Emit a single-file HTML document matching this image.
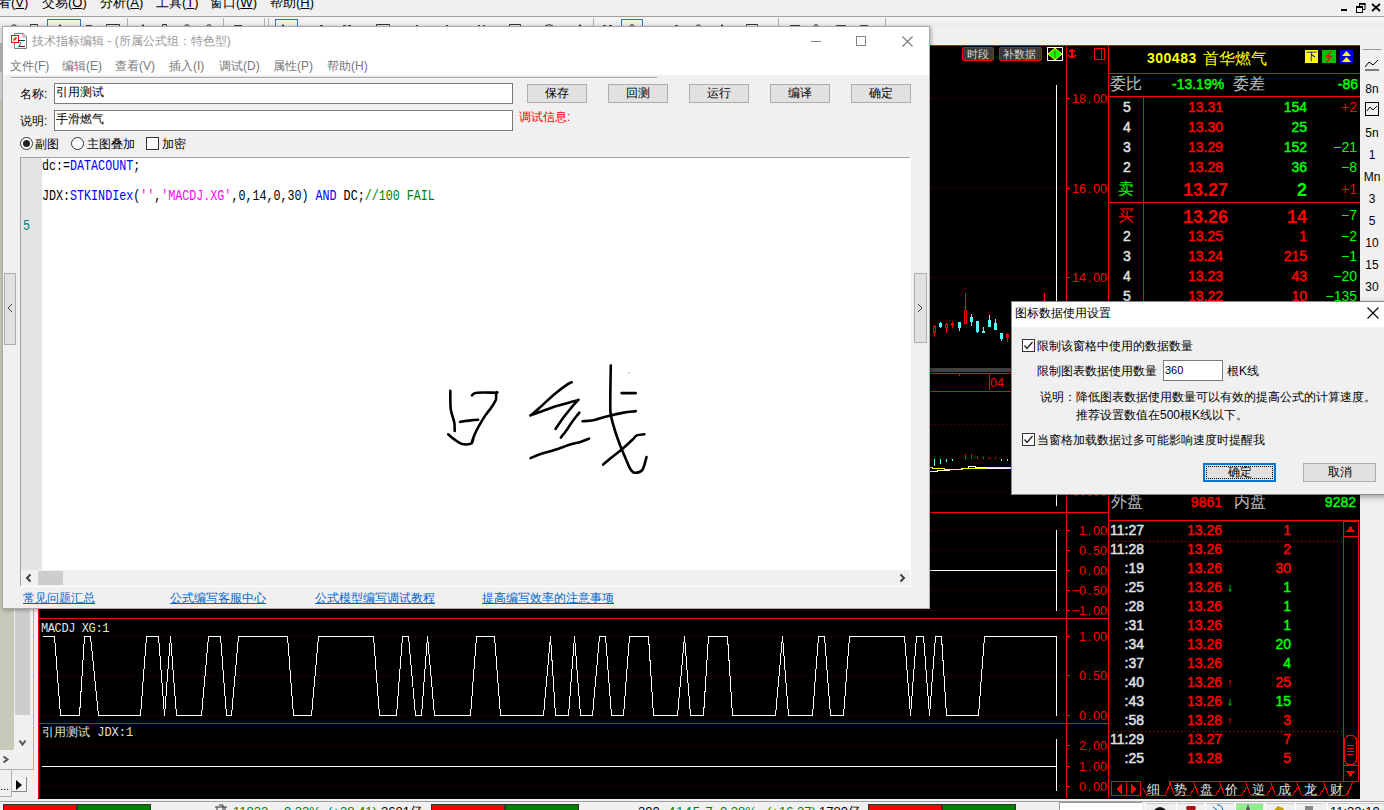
<!DOCTYPE html>
<html><head><meta charset="utf-8">
<style>
*{box-sizing:border-box}
html,body{margin:0;padding:0;width:1384px;height:810px;overflow:hidden;background:#f0f0f0;font-family:"Liberation Sans",sans-serif;font-size:12px;color:#000}
.a{position:absolute;white-space:nowrap}
svg.a{overflow:visible}
</style></head><body>
<svg class="a" style="left:0;top:0" width="1384" height="810" shape-rendering="crispEdges"><rect x="38" y="45" width="1322" height="754" fill="#000"/><rect x="38" y="45" width="1322" height="1" fill="#ff0000"/><rect x="38" y="45" width="1" height="753" fill="#ff0000"/><rect x="1066" y="45" width="1" height="753" fill="#ff0000"/><rect x="1108" y="45" width="1" height="753" fill="#ff0000"/><path d="M39 98h1v1h-1zM43 98h1v1h-1zM47 98h1v1h-1zM51 98h1v1h-1zM55 98h1v1h-1zM59 98h1v1h-1zM63 98h1v1h-1zM67 98h1v1h-1zM71 98h1v1h-1zM75 98h1v1h-1zM79 98h1v1h-1zM83 98h1v1h-1zM87 98h1v1h-1zM91 98h1v1h-1zM95 98h1v1h-1zM99 98h1v1h-1zM103 98h1v1h-1zM107 98h1v1h-1zM111 98h1v1h-1zM115 98h1v1h-1zM119 98h1v1h-1zM123 98h1v1h-1zM127 98h1v1h-1zM131 98h1v1h-1zM135 98h1v1h-1zM139 98h1v1h-1zM143 98h1v1h-1zM147 98h1v1h-1zM151 98h1v1h-1zM155 98h1v1h-1zM159 98h1v1h-1zM163 98h1v1h-1zM167 98h1v1h-1zM171 98h1v1h-1zM175 98h1v1h-1zM179 98h1v1h-1zM183 98h1v1h-1zM187 98h1v1h-1zM191 98h1v1h-1zM195 98h1v1h-1zM199 98h1v1h-1zM203 98h1v1h-1zM207 98h1v1h-1zM211 98h1v1h-1zM215 98h1v1h-1zM219 98h1v1h-1zM223 98h1v1h-1zM227 98h1v1h-1zM231 98h1v1h-1zM235 98h1v1h-1zM239 98h1v1h-1zM243 98h1v1h-1zM247 98h1v1h-1zM251 98h1v1h-1zM255 98h1v1h-1zM259 98h1v1h-1zM263 98h1v1h-1zM267 98h1v1h-1zM271 98h1v1h-1zM275 98h1v1h-1zM279 98h1v1h-1zM283 98h1v1h-1zM287 98h1v1h-1zM291 98h1v1h-1zM295 98h1v1h-1zM299 98h1v1h-1zM303 98h1v1h-1zM307 98h1v1h-1zM311 98h1v1h-1zM315 98h1v1h-1zM319 98h1v1h-1zM323 98h1v1h-1zM327 98h1v1h-1zM331 98h1v1h-1zM335 98h1v1h-1zM339 98h1v1h-1zM343 98h1v1h-1zM347 98h1v1h-1zM351 98h1v1h-1zM355 98h1v1h-1zM359 98h1v1h-1zM363 98h1v1h-1zM367 98h1v1h-1zM371 98h1v1h-1zM375 98h1v1h-1zM379 98h1v1h-1zM383 98h1v1h-1zM387 98h1v1h-1zM391 98h1v1h-1zM395 98h1v1h-1zM399 98h1v1h-1zM403 98h1v1h-1zM407 98h1v1h-1zM411 98h1v1h-1zM415 98h1v1h-1zM419 98h1v1h-1zM423 98h1v1h-1zM427 98h1v1h-1zM431 98h1v1h-1zM435 98h1v1h-1zM439 98h1v1h-1zM443 98h1v1h-1zM447 98h1v1h-1zM451 98h1v1h-1zM455 98h1v1h-1zM459 98h1v1h-1zM463 98h1v1h-1zM467 98h1v1h-1zM471 98h1v1h-1zM475 98h1v1h-1zM479 98h1v1h-1zM483 98h1v1h-1zM487 98h1v1h-1zM491 98h1v1h-1zM495 98h1v1h-1zM499 98h1v1h-1zM503 98h1v1h-1zM507 98h1v1h-1zM511 98h1v1h-1zM515 98h1v1h-1zM519 98h1v1h-1zM523 98h1v1h-1zM527 98h1v1h-1zM531 98h1v1h-1zM535 98h1v1h-1zM539 98h1v1h-1zM543 98h1v1h-1zM547 98h1v1h-1zM551 98h1v1h-1zM555 98h1v1h-1zM559 98h1v1h-1zM563 98h1v1h-1zM567 98h1v1h-1zM571 98h1v1h-1zM575 98h1v1h-1zM579 98h1v1h-1zM583 98h1v1h-1zM587 98h1v1h-1zM591 98h1v1h-1zM595 98h1v1h-1zM599 98h1v1h-1zM603 98h1v1h-1zM607 98h1v1h-1zM611 98h1v1h-1zM615 98h1v1h-1zM619 98h1v1h-1zM623 98h1v1h-1zM627 98h1v1h-1zM631 98h1v1h-1zM635 98h1v1h-1zM639 98h1v1h-1zM643 98h1v1h-1zM647 98h1v1h-1zM651 98h1v1h-1zM655 98h1v1h-1zM659 98h1v1h-1zM663 98h1v1h-1zM667 98h1v1h-1zM671 98h1v1h-1zM675 98h1v1h-1zM679 98h1v1h-1zM683 98h1v1h-1zM687 98h1v1h-1zM691 98h1v1h-1zM695 98h1v1h-1zM699 98h1v1h-1zM703 98h1v1h-1zM707 98h1v1h-1zM711 98h1v1h-1zM715 98h1v1h-1zM719 98h1v1h-1zM723 98h1v1h-1zM727 98h1v1h-1zM731 98h1v1h-1zM735 98h1v1h-1zM739 98h1v1h-1zM743 98h1v1h-1zM747 98h1v1h-1zM751 98h1v1h-1zM755 98h1v1h-1zM759 98h1v1h-1zM763 98h1v1h-1zM767 98h1v1h-1zM771 98h1v1h-1zM775 98h1v1h-1zM779 98h1v1h-1zM783 98h1v1h-1zM787 98h1v1h-1zM791 98h1v1h-1zM795 98h1v1h-1zM799 98h1v1h-1zM803 98h1v1h-1zM807 98h1v1h-1zM811 98h1v1h-1zM815 98h1v1h-1zM819 98h1v1h-1zM823 98h1v1h-1zM827 98h1v1h-1zM831 98h1v1h-1zM835 98h1v1h-1zM839 98h1v1h-1zM843 98h1v1h-1zM847 98h1v1h-1zM851 98h1v1h-1zM855 98h1v1h-1zM859 98h1v1h-1zM863 98h1v1h-1zM867 98h1v1h-1zM871 98h1v1h-1zM875 98h1v1h-1zM879 98h1v1h-1zM883 98h1v1h-1zM887 98h1v1h-1zM891 98h1v1h-1zM895 98h1v1h-1zM899 98h1v1h-1zM903 98h1v1h-1zM907 98h1v1h-1zM911 98h1v1h-1zM915 98h1v1h-1zM919 98h1v1h-1zM923 98h1v1h-1zM927 98h1v1h-1zM931 98h1v1h-1zM935 98h1v1h-1zM939 98h1v1h-1zM943 98h1v1h-1zM947 98h1v1h-1zM951 98h1v1h-1zM955 98h1v1h-1zM959 98h1v1h-1zM963 98h1v1h-1zM967 98h1v1h-1zM971 98h1v1h-1zM975 98h1v1h-1zM979 98h1v1h-1zM983 98h1v1h-1zM987 98h1v1h-1zM991 98h1v1h-1zM995 98h1v1h-1zM999 98h1v1h-1zM1003 98h1v1h-1zM1007 98h1v1h-1zM1011 98h1v1h-1zM1015 98h1v1h-1zM1019 98h1v1h-1zM1023 98h1v1h-1zM1027 98h1v1h-1zM1031 98h1v1h-1zM1035 98h1v1h-1zM1039 98h1v1h-1zM1043 98h1v1h-1zM1047 98h1v1h-1zM1051 98h1v1h-1zM1055 98h1v1h-1zM1059 98h1v1h-1zM1063 98h1v1h-1z" fill="#800000"/><rect x="1066" y="98" width="4" height="1" fill="#ff0000"/><path d="M39 188h1v1h-1zM43 188h1v1h-1zM47 188h1v1h-1zM51 188h1v1h-1zM55 188h1v1h-1zM59 188h1v1h-1zM63 188h1v1h-1zM67 188h1v1h-1zM71 188h1v1h-1zM75 188h1v1h-1zM79 188h1v1h-1zM83 188h1v1h-1zM87 188h1v1h-1zM91 188h1v1h-1zM95 188h1v1h-1zM99 188h1v1h-1zM103 188h1v1h-1zM107 188h1v1h-1zM111 188h1v1h-1zM115 188h1v1h-1zM119 188h1v1h-1zM123 188h1v1h-1zM127 188h1v1h-1zM131 188h1v1h-1zM135 188h1v1h-1zM139 188h1v1h-1zM143 188h1v1h-1zM147 188h1v1h-1zM151 188h1v1h-1zM155 188h1v1h-1zM159 188h1v1h-1zM163 188h1v1h-1zM167 188h1v1h-1zM171 188h1v1h-1zM175 188h1v1h-1zM179 188h1v1h-1zM183 188h1v1h-1zM187 188h1v1h-1zM191 188h1v1h-1zM195 188h1v1h-1zM199 188h1v1h-1zM203 188h1v1h-1zM207 188h1v1h-1zM211 188h1v1h-1zM215 188h1v1h-1zM219 188h1v1h-1zM223 188h1v1h-1zM227 188h1v1h-1zM231 188h1v1h-1zM235 188h1v1h-1zM239 188h1v1h-1zM243 188h1v1h-1zM247 188h1v1h-1zM251 188h1v1h-1zM255 188h1v1h-1zM259 188h1v1h-1zM263 188h1v1h-1zM267 188h1v1h-1zM271 188h1v1h-1zM275 188h1v1h-1zM279 188h1v1h-1zM283 188h1v1h-1zM287 188h1v1h-1zM291 188h1v1h-1zM295 188h1v1h-1zM299 188h1v1h-1zM303 188h1v1h-1zM307 188h1v1h-1zM311 188h1v1h-1zM315 188h1v1h-1zM319 188h1v1h-1zM323 188h1v1h-1zM327 188h1v1h-1zM331 188h1v1h-1zM335 188h1v1h-1zM339 188h1v1h-1zM343 188h1v1h-1zM347 188h1v1h-1zM351 188h1v1h-1zM355 188h1v1h-1zM359 188h1v1h-1zM363 188h1v1h-1zM367 188h1v1h-1zM371 188h1v1h-1zM375 188h1v1h-1zM379 188h1v1h-1zM383 188h1v1h-1zM387 188h1v1h-1zM391 188h1v1h-1zM395 188h1v1h-1zM399 188h1v1h-1zM403 188h1v1h-1zM407 188h1v1h-1zM411 188h1v1h-1zM415 188h1v1h-1zM419 188h1v1h-1zM423 188h1v1h-1zM427 188h1v1h-1zM431 188h1v1h-1zM435 188h1v1h-1zM439 188h1v1h-1zM443 188h1v1h-1zM447 188h1v1h-1zM451 188h1v1h-1zM455 188h1v1h-1zM459 188h1v1h-1zM463 188h1v1h-1zM467 188h1v1h-1zM471 188h1v1h-1zM475 188h1v1h-1zM479 188h1v1h-1zM483 188h1v1h-1zM487 188h1v1h-1zM491 188h1v1h-1zM495 188h1v1h-1zM499 188h1v1h-1zM503 188h1v1h-1zM507 188h1v1h-1zM511 188h1v1h-1zM515 188h1v1h-1zM519 188h1v1h-1zM523 188h1v1h-1zM527 188h1v1h-1zM531 188h1v1h-1zM535 188h1v1h-1zM539 188h1v1h-1zM543 188h1v1h-1zM547 188h1v1h-1zM551 188h1v1h-1zM555 188h1v1h-1zM559 188h1v1h-1zM563 188h1v1h-1zM567 188h1v1h-1zM571 188h1v1h-1zM575 188h1v1h-1zM579 188h1v1h-1zM583 188h1v1h-1zM587 188h1v1h-1zM591 188h1v1h-1zM595 188h1v1h-1zM599 188h1v1h-1zM603 188h1v1h-1zM607 188h1v1h-1zM611 188h1v1h-1zM615 188h1v1h-1zM619 188h1v1h-1zM623 188h1v1h-1zM627 188h1v1h-1zM631 188h1v1h-1zM635 188h1v1h-1zM639 188h1v1h-1zM643 188h1v1h-1zM647 188h1v1h-1zM651 188h1v1h-1zM655 188h1v1h-1zM659 188h1v1h-1zM663 188h1v1h-1zM667 188h1v1h-1zM671 188h1v1h-1zM675 188h1v1h-1zM679 188h1v1h-1zM683 188h1v1h-1zM687 188h1v1h-1zM691 188h1v1h-1zM695 188h1v1h-1zM699 188h1v1h-1zM703 188h1v1h-1zM707 188h1v1h-1zM711 188h1v1h-1zM715 188h1v1h-1zM719 188h1v1h-1zM723 188h1v1h-1zM727 188h1v1h-1zM731 188h1v1h-1zM735 188h1v1h-1zM739 188h1v1h-1zM743 188h1v1h-1zM747 188h1v1h-1zM751 188h1v1h-1zM755 188h1v1h-1zM759 188h1v1h-1zM763 188h1v1h-1zM767 188h1v1h-1zM771 188h1v1h-1zM775 188h1v1h-1zM779 188h1v1h-1zM783 188h1v1h-1zM787 188h1v1h-1zM791 188h1v1h-1zM795 188h1v1h-1zM799 188h1v1h-1zM803 188h1v1h-1zM807 188h1v1h-1zM811 188h1v1h-1zM815 188h1v1h-1zM819 188h1v1h-1zM823 188h1v1h-1zM827 188h1v1h-1zM831 188h1v1h-1zM835 188h1v1h-1zM839 188h1v1h-1zM843 188h1v1h-1zM847 188h1v1h-1zM851 188h1v1h-1zM855 188h1v1h-1zM859 188h1v1h-1zM863 188h1v1h-1zM867 188h1v1h-1zM871 188h1v1h-1zM875 188h1v1h-1zM879 188h1v1h-1zM883 188h1v1h-1zM887 188h1v1h-1zM891 188h1v1h-1zM895 188h1v1h-1zM899 188h1v1h-1zM903 188h1v1h-1zM907 188h1v1h-1zM911 188h1v1h-1zM915 188h1v1h-1zM919 188h1v1h-1zM923 188h1v1h-1zM927 188h1v1h-1zM931 188h1v1h-1zM935 188h1v1h-1zM939 188h1v1h-1zM943 188h1v1h-1zM947 188h1v1h-1zM951 188h1v1h-1zM955 188h1v1h-1zM959 188h1v1h-1zM963 188h1v1h-1zM967 188h1v1h-1zM971 188h1v1h-1zM975 188h1v1h-1zM979 188h1v1h-1zM983 188h1v1h-1zM987 188h1v1h-1zM991 188h1v1h-1zM995 188h1v1h-1zM999 188h1v1h-1zM1003 188h1v1h-1zM1007 188h1v1h-1zM1011 188h1v1h-1zM1015 188h1v1h-1zM1019 188h1v1h-1zM1023 188h1v1h-1zM1027 188h1v1h-1zM1031 188h1v1h-1zM1035 188h1v1h-1zM1039 188h1v1h-1zM1043 188h1v1h-1zM1047 188h1v1h-1zM1051 188h1v1h-1zM1055 188h1v1h-1zM1059 188h1v1h-1zM1063 188h1v1h-1z" fill="#800000"/><rect x="1066" y="188" width="4" height="1" fill="#ff0000"/><path d="M39 277h1v1h-1zM43 277h1v1h-1zM47 277h1v1h-1zM51 277h1v1h-1zM55 277h1v1h-1zM59 277h1v1h-1zM63 277h1v1h-1zM67 277h1v1h-1zM71 277h1v1h-1zM75 277h1v1h-1zM79 277h1v1h-1zM83 277h1v1h-1zM87 277h1v1h-1zM91 277h1v1h-1zM95 277h1v1h-1zM99 277h1v1h-1zM103 277h1v1h-1zM107 277h1v1h-1zM111 277h1v1h-1zM115 277h1v1h-1zM119 277h1v1h-1zM123 277h1v1h-1zM127 277h1v1h-1zM131 277h1v1h-1zM135 277h1v1h-1zM139 277h1v1h-1zM143 277h1v1h-1zM147 277h1v1h-1zM151 277h1v1h-1zM155 277h1v1h-1zM159 277h1v1h-1zM163 277h1v1h-1zM167 277h1v1h-1zM171 277h1v1h-1zM175 277h1v1h-1zM179 277h1v1h-1zM183 277h1v1h-1zM187 277h1v1h-1zM191 277h1v1h-1zM195 277h1v1h-1zM199 277h1v1h-1zM203 277h1v1h-1zM207 277h1v1h-1zM211 277h1v1h-1zM215 277h1v1h-1zM219 277h1v1h-1zM223 277h1v1h-1zM227 277h1v1h-1zM231 277h1v1h-1zM235 277h1v1h-1zM239 277h1v1h-1zM243 277h1v1h-1zM247 277h1v1h-1zM251 277h1v1h-1zM255 277h1v1h-1zM259 277h1v1h-1zM263 277h1v1h-1zM267 277h1v1h-1zM271 277h1v1h-1zM275 277h1v1h-1zM279 277h1v1h-1zM283 277h1v1h-1zM287 277h1v1h-1zM291 277h1v1h-1zM295 277h1v1h-1zM299 277h1v1h-1zM303 277h1v1h-1zM307 277h1v1h-1zM311 277h1v1h-1zM315 277h1v1h-1zM319 277h1v1h-1zM323 277h1v1h-1zM327 277h1v1h-1zM331 277h1v1h-1zM335 277h1v1h-1zM339 277h1v1h-1zM343 277h1v1h-1zM347 277h1v1h-1zM351 277h1v1h-1zM355 277h1v1h-1zM359 277h1v1h-1zM363 277h1v1h-1zM367 277h1v1h-1zM371 277h1v1h-1zM375 277h1v1h-1zM379 277h1v1h-1zM383 277h1v1h-1zM387 277h1v1h-1zM391 277h1v1h-1zM395 277h1v1h-1zM399 277h1v1h-1zM403 277h1v1h-1zM407 277h1v1h-1zM411 277h1v1h-1zM415 277h1v1h-1zM419 277h1v1h-1zM423 277h1v1h-1zM427 277h1v1h-1zM431 277h1v1h-1zM435 277h1v1h-1zM439 277h1v1h-1zM443 277h1v1h-1zM447 277h1v1h-1zM451 277h1v1h-1zM455 277h1v1h-1zM459 277h1v1h-1zM463 277h1v1h-1zM467 277h1v1h-1zM471 277h1v1h-1zM475 277h1v1h-1zM479 277h1v1h-1zM483 277h1v1h-1zM487 277h1v1h-1zM491 277h1v1h-1zM495 277h1v1h-1zM499 277h1v1h-1zM503 277h1v1h-1zM507 277h1v1h-1zM511 277h1v1h-1zM515 277h1v1h-1zM519 277h1v1h-1zM523 277h1v1h-1zM527 277h1v1h-1zM531 277h1v1h-1zM535 277h1v1h-1zM539 277h1v1h-1zM543 277h1v1h-1zM547 277h1v1h-1zM551 277h1v1h-1zM555 277h1v1h-1zM559 277h1v1h-1zM563 277h1v1h-1zM567 277h1v1h-1zM571 277h1v1h-1zM575 277h1v1h-1zM579 277h1v1h-1zM583 277h1v1h-1zM587 277h1v1h-1zM591 277h1v1h-1zM595 277h1v1h-1zM599 277h1v1h-1zM603 277h1v1h-1zM607 277h1v1h-1zM611 277h1v1h-1zM615 277h1v1h-1zM619 277h1v1h-1zM623 277h1v1h-1zM627 277h1v1h-1zM631 277h1v1h-1zM635 277h1v1h-1zM639 277h1v1h-1zM643 277h1v1h-1zM647 277h1v1h-1zM651 277h1v1h-1zM655 277h1v1h-1zM659 277h1v1h-1zM663 277h1v1h-1zM667 277h1v1h-1zM671 277h1v1h-1zM675 277h1v1h-1zM679 277h1v1h-1zM683 277h1v1h-1zM687 277h1v1h-1zM691 277h1v1h-1zM695 277h1v1h-1zM699 277h1v1h-1zM703 277h1v1h-1zM707 277h1v1h-1zM711 277h1v1h-1zM715 277h1v1h-1zM719 277h1v1h-1zM723 277h1v1h-1zM727 277h1v1h-1zM731 277h1v1h-1zM735 277h1v1h-1zM739 277h1v1h-1zM743 277h1v1h-1zM747 277h1v1h-1zM751 277h1v1h-1zM755 277h1v1h-1zM759 277h1v1h-1zM763 277h1v1h-1zM767 277h1v1h-1zM771 277h1v1h-1zM775 277h1v1h-1zM779 277h1v1h-1zM783 277h1v1h-1zM787 277h1v1h-1zM791 277h1v1h-1zM795 277h1v1h-1zM799 277h1v1h-1zM803 277h1v1h-1zM807 277h1v1h-1zM811 277h1v1h-1zM815 277h1v1h-1zM819 277h1v1h-1zM823 277h1v1h-1zM827 277h1v1h-1zM831 277h1v1h-1zM835 277h1v1h-1zM839 277h1v1h-1zM843 277h1v1h-1zM847 277h1v1h-1zM851 277h1v1h-1zM855 277h1v1h-1zM859 277h1v1h-1zM863 277h1v1h-1zM867 277h1v1h-1zM871 277h1v1h-1zM875 277h1v1h-1zM879 277h1v1h-1zM883 277h1v1h-1zM887 277h1v1h-1zM891 277h1v1h-1zM895 277h1v1h-1zM899 277h1v1h-1zM903 277h1v1h-1zM907 277h1v1h-1zM911 277h1v1h-1zM915 277h1v1h-1zM919 277h1v1h-1zM923 277h1v1h-1zM927 277h1v1h-1zM931 277h1v1h-1zM935 277h1v1h-1zM939 277h1v1h-1zM943 277h1v1h-1zM947 277h1v1h-1zM951 277h1v1h-1zM955 277h1v1h-1zM959 277h1v1h-1zM963 277h1v1h-1zM967 277h1v1h-1zM971 277h1v1h-1zM975 277h1v1h-1zM979 277h1v1h-1zM983 277h1v1h-1zM987 277h1v1h-1zM991 277h1v1h-1zM995 277h1v1h-1zM999 277h1v1h-1zM1003 277h1v1h-1zM1007 277h1v1h-1zM1011 277h1v1h-1zM1015 277h1v1h-1zM1019 277h1v1h-1zM1023 277h1v1h-1zM1027 277h1v1h-1zM1031 277h1v1h-1zM1035 277h1v1h-1zM1039 277h1v1h-1zM1043 277h1v1h-1zM1047 277h1v1h-1zM1051 277h1v1h-1zM1055 277h1v1h-1zM1059 277h1v1h-1zM1063 277h1v1h-1z" fill="#800000"/><rect x="1066" y="277" width="4" height="1" fill="#ff0000"/><rect x="38" y="368" width="1028" height="4" fill="#404040"/><rect x="38" y="373" width="1028" height="1" fill="#ff0000"/><rect x="38" y="391" width="1028" height="1" fill="#ff0000"/><rect x="989" y="374" width="1" height="16" fill="#ff0000"/><rect x="959" y="374" width="1" height="2" fill="#ff0000"/><path d="M39 424h1v1h-1zM43 424h1v1h-1zM47 424h1v1h-1zM51 424h1v1h-1zM55 424h1v1h-1zM59 424h1v1h-1zM63 424h1v1h-1zM67 424h1v1h-1zM71 424h1v1h-1zM75 424h1v1h-1zM79 424h1v1h-1zM83 424h1v1h-1zM87 424h1v1h-1zM91 424h1v1h-1zM95 424h1v1h-1zM99 424h1v1h-1zM103 424h1v1h-1zM107 424h1v1h-1zM111 424h1v1h-1zM115 424h1v1h-1zM119 424h1v1h-1zM123 424h1v1h-1zM127 424h1v1h-1zM131 424h1v1h-1zM135 424h1v1h-1zM139 424h1v1h-1zM143 424h1v1h-1zM147 424h1v1h-1zM151 424h1v1h-1zM155 424h1v1h-1zM159 424h1v1h-1zM163 424h1v1h-1zM167 424h1v1h-1zM171 424h1v1h-1zM175 424h1v1h-1zM179 424h1v1h-1zM183 424h1v1h-1zM187 424h1v1h-1zM191 424h1v1h-1zM195 424h1v1h-1zM199 424h1v1h-1zM203 424h1v1h-1zM207 424h1v1h-1zM211 424h1v1h-1zM215 424h1v1h-1zM219 424h1v1h-1zM223 424h1v1h-1zM227 424h1v1h-1zM231 424h1v1h-1zM235 424h1v1h-1zM239 424h1v1h-1zM243 424h1v1h-1zM247 424h1v1h-1zM251 424h1v1h-1zM255 424h1v1h-1zM259 424h1v1h-1zM263 424h1v1h-1zM267 424h1v1h-1zM271 424h1v1h-1zM275 424h1v1h-1zM279 424h1v1h-1zM283 424h1v1h-1zM287 424h1v1h-1zM291 424h1v1h-1zM295 424h1v1h-1zM299 424h1v1h-1zM303 424h1v1h-1zM307 424h1v1h-1zM311 424h1v1h-1zM315 424h1v1h-1zM319 424h1v1h-1zM323 424h1v1h-1zM327 424h1v1h-1zM331 424h1v1h-1zM335 424h1v1h-1zM339 424h1v1h-1zM343 424h1v1h-1zM347 424h1v1h-1zM351 424h1v1h-1zM355 424h1v1h-1zM359 424h1v1h-1zM363 424h1v1h-1zM367 424h1v1h-1zM371 424h1v1h-1zM375 424h1v1h-1zM379 424h1v1h-1zM383 424h1v1h-1zM387 424h1v1h-1zM391 424h1v1h-1zM395 424h1v1h-1zM399 424h1v1h-1zM403 424h1v1h-1zM407 424h1v1h-1zM411 424h1v1h-1zM415 424h1v1h-1zM419 424h1v1h-1zM423 424h1v1h-1zM427 424h1v1h-1zM431 424h1v1h-1zM435 424h1v1h-1zM439 424h1v1h-1zM443 424h1v1h-1zM447 424h1v1h-1zM451 424h1v1h-1zM455 424h1v1h-1zM459 424h1v1h-1zM463 424h1v1h-1zM467 424h1v1h-1zM471 424h1v1h-1zM475 424h1v1h-1zM479 424h1v1h-1zM483 424h1v1h-1zM487 424h1v1h-1zM491 424h1v1h-1zM495 424h1v1h-1zM499 424h1v1h-1zM503 424h1v1h-1zM507 424h1v1h-1zM511 424h1v1h-1zM515 424h1v1h-1zM519 424h1v1h-1zM523 424h1v1h-1zM527 424h1v1h-1zM531 424h1v1h-1zM535 424h1v1h-1zM539 424h1v1h-1zM543 424h1v1h-1zM547 424h1v1h-1zM551 424h1v1h-1zM555 424h1v1h-1zM559 424h1v1h-1zM563 424h1v1h-1zM567 424h1v1h-1zM571 424h1v1h-1zM575 424h1v1h-1zM579 424h1v1h-1zM583 424h1v1h-1zM587 424h1v1h-1zM591 424h1v1h-1zM595 424h1v1h-1zM599 424h1v1h-1zM603 424h1v1h-1zM607 424h1v1h-1zM611 424h1v1h-1zM615 424h1v1h-1zM619 424h1v1h-1zM623 424h1v1h-1zM627 424h1v1h-1zM631 424h1v1h-1zM635 424h1v1h-1zM639 424h1v1h-1zM643 424h1v1h-1zM647 424h1v1h-1zM651 424h1v1h-1zM655 424h1v1h-1zM659 424h1v1h-1zM663 424h1v1h-1zM667 424h1v1h-1zM671 424h1v1h-1zM675 424h1v1h-1zM679 424h1v1h-1zM683 424h1v1h-1zM687 424h1v1h-1zM691 424h1v1h-1zM695 424h1v1h-1zM699 424h1v1h-1zM703 424h1v1h-1zM707 424h1v1h-1zM711 424h1v1h-1zM715 424h1v1h-1zM719 424h1v1h-1zM723 424h1v1h-1zM727 424h1v1h-1zM731 424h1v1h-1zM735 424h1v1h-1zM739 424h1v1h-1zM743 424h1v1h-1zM747 424h1v1h-1zM751 424h1v1h-1zM755 424h1v1h-1zM759 424h1v1h-1zM763 424h1v1h-1zM767 424h1v1h-1zM771 424h1v1h-1zM775 424h1v1h-1zM779 424h1v1h-1zM783 424h1v1h-1zM787 424h1v1h-1zM791 424h1v1h-1zM795 424h1v1h-1zM799 424h1v1h-1zM803 424h1v1h-1zM807 424h1v1h-1zM811 424h1v1h-1zM815 424h1v1h-1zM819 424h1v1h-1zM823 424h1v1h-1zM827 424h1v1h-1zM831 424h1v1h-1zM835 424h1v1h-1zM839 424h1v1h-1zM843 424h1v1h-1zM847 424h1v1h-1zM851 424h1v1h-1zM855 424h1v1h-1zM859 424h1v1h-1zM863 424h1v1h-1zM867 424h1v1h-1zM871 424h1v1h-1zM875 424h1v1h-1zM879 424h1v1h-1zM883 424h1v1h-1zM887 424h1v1h-1zM891 424h1v1h-1zM895 424h1v1h-1zM899 424h1v1h-1zM903 424h1v1h-1zM907 424h1v1h-1zM911 424h1v1h-1zM915 424h1v1h-1zM919 424h1v1h-1zM923 424h1v1h-1zM927 424h1v1h-1zM931 424h1v1h-1zM935 424h1v1h-1zM939 424h1v1h-1zM943 424h1v1h-1zM947 424h1v1h-1zM951 424h1v1h-1zM955 424h1v1h-1zM959 424h1v1h-1zM963 424h1v1h-1zM967 424h1v1h-1zM971 424h1v1h-1zM975 424h1v1h-1zM979 424h1v1h-1zM983 424h1v1h-1zM987 424h1v1h-1zM991 424h1v1h-1zM995 424h1v1h-1zM999 424h1v1h-1zM1003 424h1v1h-1zM1007 424h1v1h-1zM1011 424h1v1h-1zM1015 424h1v1h-1zM1019 424h1v1h-1zM1023 424h1v1h-1zM1027 424h1v1h-1zM1031 424h1v1h-1zM1035 424h1v1h-1zM1039 424h1v1h-1zM1043 424h1v1h-1zM1047 424h1v1h-1zM1051 424h1v1h-1zM1055 424h1v1h-1zM1059 424h1v1h-1zM1063 424h1v1h-1z" fill="#800000"/><path d="M39 458h1v1h-1zM43 458h1v1h-1zM47 458h1v1h-1zM51 458h1v1h-1zM55 458h1v1h-1zM59 458h1v1h-1zM63 458h1v1h-1zM67 458h1v1h-1zM71 458h1v1h-1zM75 458h1v1h-1zM79 458h1v1h-1zM83 458h1v1h-1zM87 458h1v1h-1zM91 458h1v1h-1zM95 458h1v1h-1zM99 458h1v1h-1zM103 458h1v1h-1zM107 458h1v1h-1zM111 458h1v1h-1zM115 458h1v1h-1zM119 458h1v1h-1zM123 458h1v1h-1zM127 458h1v1h-1zM131 458h1v1h-1zM135 458h1v1h-1zM139 458h1v1h-1zM143 458h1v1h-1zM147 458h1v1h-1zM151 458h1v1h-1zM155 458h1v1h-1zM159 458h1v1h-1zM163 458h1v1h-1zM167 458h1v1h-1zM171 458h1v1h-1zM175 458h1v1h-1zM179 458h1v1h-1zM183 458h1v1h-1zM187 458h1v1h-1zM191 458h1v1h-1zM195 458h1v1h-1zM199 458h1v1h-1zM203 458h1v1h-1zM207 458h1v1h-1zM211 458h1v1h-1zM215 458h1v1h-1zM219 458h1v1h-1zM223 458h1v1h-1zM227 458h1v1h-1zM231 458h1v1h-1zM235 458h1v1h-1zM239 458h1v1h-1zM243 458h1v1h-1zM247 458h1v1h-1zM251 458h1v1h-1zM255 458h1v1h-1zM259 458h1v1h-1zM263 458h1v1h-1zM267 458h1v1h-1zM271 458h1v1h-1zM275 458h1v1h-1zM279 458h1v1h-1zM283 458h1v1h-1zM287 458h1v1h-1zM291 458h1v1h-1zM295 458h1v1h-1zM299 458h1v1h-1zM303 458h1v1h-1zM307 458h1v1h-1zM311 458h1v1h-1zM315 458h1v1h-1zM319 458h1v1h-1zM323 458h1v1h-1zM327 458h1v1h-1zM331 458h1v1h-1zM335 458h1v1h-1zM339 458h1v1h-1zM343 458h1v1h-1zM347 458h1v1h-1zM351 458h1v1h-1zM355 458h1v1h-1zM359 458h1v1h-1zM363 458h1v1h-1zM367 458h1v1h-1zM371 458h1v1h-1zM375 458h1v1h-1zM379 458h1v1h-1zM383 458h1v1h-1zM387 458h1v1h-1zM391 458h1v1h-1zM395 458h1v1h-1zM399 458h1v1h-1zM403 458h1v1h-1zM407 458h1v1h-1zM411 458h1v1h-1zM415 458h1v1h-1zM419 458h1v1h-1zM423 458h1v1h-1zM427 458h1v1h-1zM431 458h1v1h-1zM435 458h1v1h-1zM439 458h1v1h-1zM443 458h1v1h-1zM447 458h1v1h-1zM451 458h1v1h-1zM455 458h1v1h-1zM459 458h1v1h-1zM463 458h1v1h-1zM467 458h1v1h-1zM471 458h1v1h-1zM475 458h1v1h-1zM479 458h1v1h-1zM483 458h1v1h-1zM487 458h1v1h-1zM491 458h1v1h-1zM495 458h1v1h-1zM499 458h1v1h-1zM503 458h1v1h-1zM507 458h1v1h-1zM511 458h1v1h-1zM515 458h1v1h-1zM519 458h1v1h-1zM523 458h1v1h-1zM527 458h1v1h-1zM531 458h1v1h-1zM535 458h1v1h-1zM539 458h1v1h-1zM543 458h1v1h-1zM547 458h1v1h-1zM551 458h1v1h-1zM555 458h1v1h-1zM559 458h1v1h-1zM563 458h1v1h-1zM567 458h1v1h-1zM571 458h1v1h-1zM575 458h1v1h-1zM579 458h1v1h-1zM583 458h1v1h-1zM587 458h1v1h-1zM591 458h1v1h-1zM595 458h1v1h-1zM599 458h1v1h-1zM603 458h1v1h-1zM607 458h1v1h-1zM611 458h1v1h-1zM615 458h1v1h-1zM619 458h1v1h-1zM623 458h1v1h-1zM627 458h1v1h-1zM631 458h1v1h-1zM635 458h1v1h-1zM639 458h1v1h-1zM643 458h1v1h-1zM647 458h1v1h-1zM651 458h1v1h-1zM655 458h1v1h-1zM659 458h1v1h-1zM663 458h1v1h-1zM667 458h1v1h-1zM671 458h1v1h-1zM675 458h1v1h-1zM679 458h1v1h-1zM683 458h1v1h-1zM687 458h1v1h-1zM691 458h1v1h-1zM695 458h1v1h-1zM699 458h1v1h-1zM703 458h1v1h-1zM707 458h1v1h-1zM711 458h1v1h-1zM715 458h1v1h-1zM719 458h1v1h-1zM723 458h1v1h-1zM727 458h1v1h-1zM731 458h1v1h-1zM735 458h1v1h-1zM739 458h1v1h-1zM743 458h1v1h-1zM747 458h1v1h-1zM751 458h1v1h-1zM755 458h1v1h-1zM759 458h1v1h-1zM763 458h1v1h-1zM767 458h1v1h-1zM771 458h1v1h-1zM775 458h1v1h-1zM779 458h1v1h-1zM783 458h1v1h-1zM787 458h1v1h-1zM791 458h1v1h-1zM795 458h1v1h-1zM799 458h1v1h-1zM803 458h1v1h-1zM807 458h1v1h-1zM811 458h1v1h-1zM815 458h1v1h-1zM819 458h1v1h-1zM823 458h1v1h-1zM827 458h1v1h-1zM831 458h1v1h-1zM835 458h1v1h-1zM839 458h1v1h-1zM843 458h1v1h-1zM847 458h1v1h-1zM851 458h1v1h-1zM855 458h1v1h-1zM859 458h1v1h-1zM863 458h1v1h-1zM867 458h1v1h-1zM871 458h1v1h-1zM875 458h1v1h-1zM879 458h1v1h-1zM883 458h1v1h-1zM887 458h1v1h-1zM891 458h1v1h-1zM895 458h1v1h-1zM899 458h1v1h-1zM903 458h1v1h-1zM907 458h1v1h-1zM911 458h1v1h-1zM915 458h1v1h-1zM919 458h1v1h-1zM923 458h1v1h-1zM927 458h1v1h-1zM931 458h1v1h-1zM935 458h1v1h-1zM939 458h1v1h-1zM943 458h1v1h-1zM947 458h1v1h-1zM951 458h1v1h-1zM955 458h1v1h-1zM959 458h1v1h-1zM963 458h1v1h-1zM967 458h1v1h-1zM971 458h1v1h-1zM975 458h1v1h-1zM979 458h1v1h-1zM983 458h1v1h-1zM987 458h1v1h-1zM991 458h1v1h-1zM995 458h1v1h-1zM999 458h1v1h-1zM1003 458h1v1h-1zM1007 458h1v1h-1zM1011 458h1v1h-1zM1015 458h1v1h-1zM1019 458h1v1h-1zM1023 458h1v1h-1zM1027 458h1v1h-1zM1031 458h1v1h-1zM1035 458h1v1h-1zM1039 458h1v1h-1zM1043 458h1v1h-1zM1047 458h1v1h-1zM1051 458h1v1h-1zM1055 458h1v1h-1zM1059 458h1v1h-1zM1063 458h1v1h-1z" fill="#800000"/><path d="M39 491h1v1h-1zM43 491h1v1h-1zM47 491h1v1h-1zM51 491h1v1h-1zM55 491h1v1h-1zM59 491h1v1h-1zM63 491h1v1h-1zM67 491h1v1h-1zM71 491h1v1h-1zM75 491h1v1h-1zM79 491h1v1h-1zM83 491h1v1h-1zM87 491h1v1h-1zM91 491h1v1h-1zM95 491h1v1h-1zM99 491h1v1h-1zM103 491h1v1h-1zM107 491h1v1h-1zM111 491h1v1h-1zM115 491h1v1h-1zM119 491h1v1h-1zM123 491h1v1h-1zM127 491h1v1h-1zM131 491h1v1h-1zM135 491h1v1h-1zM139 491h1v1h-1zM143 491h1v1h-1zM147 491h1v1h-1zM151 491h1v1h-1zM155 491h1v1h-1zM159 491h1v1h-1zM163 491h1v1h-1zM167 491h1v1h-1zM171 491h1v1h-1zM175 491h1v1h-1zM179 491h1v1h-1zM183 491h1v1h-1zM187 491h1v1h-1zM191 491h1v1h-1zM195 491h1v1h-1zM199 491h1v1h-1zM203 491h1v1h-1zM207 491h1v1h-1zM211 491h1v1h-1zM215 491h1v1h-1zM219 491h1v1h-1zM223 491h1v1h-1zM227 491h1v1h-1zM231 491h1v1h-1zM235 491h1v1h-1zM239 491h1v1h-1zM243 491h1v1h-1zM247 491h1v1h-1zM251 491h1v1h-1zM255 491h1v1h-1zM259 491h1v1h-1zM263 491h1v1h-1zM267 491h1v1h-1zM271 491h1v1h-1zM275 491h1v1h-1zM279 491h1v1h-1zM283 491h1v1h-1zM287 491h1v1h-1zM291 491h1v1h-1zM295 491h1v1h-1zM299 491h1v1h-1zM303 491h1v1h-1zM307 491h1v1h-1zM311 491h1v1h-1zM315 491h1v1h-1zM319 491h1v1h-1zM323 491h1v1h-1zM327 491h1v1h-1zM331 491h1v1h-1zM335 491h1v1h-1zM339 491h1v1h-1zM343 491h1v1h-1zM347 491h1v1h-1zM351 491h1v1h-1zM355 491h1v1h-1zM359 491h1v1h-1zM363 491h1v1h-1zM367 491h1v1h-1zM371 491h1v1h-1zM375 491h1v1h-1zM379 491h1v1h-1zM383 491h1v1h-1zM387 491h1v1h-1zM391 491h1v1h-1zM395 491h1v1h-1zM399 491h1v1h-1zM403 491h1v1h-1zM407 491h1v1h-1zM411 491h1v1h-1zM415 491h1v1h-1zM419 491h1v1h-1zM423 491h1v1h-1zM427 491h1v1h-1zM431 491h1v1h-1zM435 491h1v1h-1zM439 491h1v1h-1zM443 491h1v1h-1zM447 491h1v1h-1zM451 491h1v1h-1zM455 491h1v1h-1zM459 491h1v1h-1zM463 491h1v1h-1zM467 491h1v1h-1zM471 491h1v1h-1zM475 491h1v1h-1zM479 491h1v1h-1zM483 491h1v1h-1zM487 491h1v1h-1zM491 491h1v1h-1zM495 491h1v1h-1zM499 491h1v1h-1zM503 491h1v1h-1zM507 491h1v1h-1zM511 491h1v1h-1zM515 491h1v1h-1zM519 491h1v1h-1zM523 491h1v1h-1zM527 491h1v1h-1zM531 491h1v1h-1zM535 491h1v1h-1zM539 491h1v1h-1zM543 491h1v1h-1zM547 491h1v1h-1zM551 491h1v1h-1zM555 491h1v1h-1zM559 491h1v1h-1zM563 491h1v1h-1zM567 491h1v1h-1zM571 491h1v1h-1zM575 491h1v1h-1zM579 491h1v1h-1zM583 491h1v1h-1zM587 491h1v1h-1zM591 491h1v1h-1zM595 491h1v1h-1zM599 491h1v1h-1zM603 491h1v1h-1zM607 491h1v1h-1zM611 491h1v1h-1zM615 491h1v1h-1zM619 491h1v1h-1zM623 491h1v1h-1zM627 491h1v1h-1zM631 491h1v1h-1zM635 491h1v1h-1zM639 491h1v1h-1zM643 491h1v1h-1zM647 491h1v1h-1zM651 491h1v1h-1zM655 491h1v1h-1zM659 491h1v1h-1zM663 491h1v1h-1zM667 491h1v1h-1zM671 491h1v1h-1zM675 491h1v1h-1zM679 491h1v1h-1zM683 491h1v1h-1zM687 491h1v1h-1zM691 491h1v1h-1zM695 491h1v1h-1zM699 491h1v1h-1zM703 491h1v1h-1zM707 491h1v1h-1zM711 491h1v1h-1zM715 491h1v1h-1zM719 491h1v1h-1zM723 491h1v1h-1zM727 491h1v1h-1zM731 491h1v1h-1zM735 491h1v1h-1zM739 491h1v1h-1zM743 491h1v1h-1zM747 491h1v1h-1zM751 491h1v1h-1zM755 491h1v1h-1zM759 491h1v1h-1zM763 491h1v1h-1zM767 491h1v1h-1zM771 491h1v1h-1zM775 491h1v1h-1zM779 491h1v1h-1zM783 491h1v1h-1zM787 491h1v1h-1zM791 491h1v1h-1zM795 491h1v1h-1zM799 491h1v1h-1zM803 491h1v1h-1zM807 491h1v1h-1zM811 491h1v1h-1zM815 491h1v1h-1zM819 491h1v1h-1zM823 491h1v1h-1zM827 491h1v1h-1zM831 491h1v1h-1zM835 491h1v1h-1zM839 491h1v1h-1zM843 491h1v1h-1zM847 491h1v1h-1zM851 491h1v1h-1zM855 491h1v1h-1zM859 491h1v1h-1zM863 491h1v1h-1zM867 491h1v1h-1zM871 491h1v1h-1zM875 491h1v1h-1zM879 491h1v1h-1zM883 491h1v1h-1zM887 491h1v1h-1zM891 491h1v1h-1zM895 491h1v1h-1zM899 491h1v1h-1zM903 491h1v1h-1zM907 491h1v1h-1zM911 491h1v1h-1zM915 491h1v1h-1zM919 491h1v1h-1zM923 491h1v1h-1zM927 491h1v1h-1zM931 491h1v1h-1zM935 491h1v1h-1zM939 491h1v1h-1zM943 491h1v1h-1zM947 491h1v1h-1zM951 491h1v1h-1zM955 491h1v1h-1zM959 491h1v1h-1zM963 491h1v1h-1zM967 491h1v1h-1zM971 491h1v1h-1zM975 491h1v1h-1zM979 491h1v1h-1zM983 491h1v1h-1zM987 491h1v1h-1zM991 491h1v1h-1zM995 491h1v1h-1zM999 491h1v1h-1zM1003 491h1v1h-1zM1007 491h1v1h-1zM1011 491h1v1h-1zM1015 491h1v1h-1zM1019 491h1v1h-1zM1023 491h1v1h-1zM1027 491h1v1h-1zM1031 491h1v1h-1zM1035 491h1v1h-1zM1039 491h1v1h-1zM1043 491h1v1h-1zM1047 491h1v1h-1zM1051 491h1v1h-1zM1055 491h1v1h-1zM1059 491h1v1h-1zM1063 491h1v1h-1z" fill="#800000"/><rect x="38" y="512" width="1070" height="1" fill="#ff0000"/><path d="M39 530h1v1h-1zM43 530h1v1h-1zM47 530h1v1h-1zM51 530h1v1h-1zM55 530h1v1h-1zM59 530h1v1h-1zM63 530h1v1h-1zM67 530h1v1h-1zM71 530h1v1h-1zM75 530h1v1h-1zM79 530h1v1h-1zM83 530h1v1h-1zM87 530h1v1h-1zM91 530h1v1h-1zM95 530h1v1h-1zM99 530h1v1h-1zM103 530h1v1h-1zM107 530h1v1h-1zM111 530h1v1h-1zM115 530h1v1h-1zM119 530h1v1h-1zM123 530h1v1h-1zM127 530h1v1h-1zM131 530h1v1h-1zM135 530h1v1h-1zM139 530h1v1h-1zM143 530h1v1h-1zM147 530h1v1h-1zM151 530h1v1h-1zM155 530h1v1h-1zM159 530h1v1h-1zM163 530h1v1h-1zM167 530h1v1h-1zM171 530h1v1h-1zM175 530h1v1h-1zM179 530h1v1h-1zM183 530h1v1h-1zM187 530h1v1h-1zM191 530h1v1h-1zM195 530h1v1h-1zM199 530h1v1h-1zM203 530h1v1h-1zM207 530h1v1h-1zM211 530h1v1h-1zM215 530h1v1h-1zM219 530h1v1h-1zM223 530h1v1h-1zM227 530h1v1h-1zM231 530h1v1h-1zM235 530h1v1h-1zM239 530h1v1h-1zM243 530h1v1h-1zM247 530h1v1h-1zM251 530h1v1h-1zM255 530h1v1h-1zM259 530h1v1h-1zM263 530h1v1h-1zM267 530h1v1h-1zM271 530h1v1h-1zM275 530h1v1h-1zM279 530h1v1h-1zM283 530h1v1h-1zM287 530h1v1h-1zM291 530h1v1h-1zM295 530h1v1h-1zM299 530h1v1h-1zM303 530h1v1h-1zM307 530h1v1h-1zM311 530h1v1h-1zM315 530h1v1h-1zM319 530h1v1h-1zM323 530h1v1h-1zM327 530h1v1h-1zM331 530h1v1h-1zM335 530h1v1h-1zM339 530h1v1h-1zM343 530h1v1h-1zM347 530h1v1h-1zM351 530h1v1h-1zM355 530h1v1h-1zM359 530h1v1h-1zM363 530h1v1h-1zM367 530h1v1h-1zM371 530h1v1h-1zM375 530h1v1h-1zM379 530h1v1h-1zM383 530h1v1h-1zM387 530h1v1h-1zM391 530h1v1h-1zM395 530h1v1h-1zM399 530h1v1h-1zM403 530h1v1h-1zM407 530h1v1h-1zM411 530h1v1h-1zM415 530h1v1h-1zM419 530h1v1h-1zM423 530h1v1h-1zM427 530h1v1h-1zM431 530h1v1h-1zM435 530h1v1h-1zM439 530h1v1h-1zM443 530h1v1h-1zM447 530h1v1h-1zM451 530h1v1h-1zM455 530h1v1h-1zM459 530h1v1h-1zM463 530h1v1h-1zM467 530h1v1h-1zM471 530h1v1h-1zM475 530h1v1h-1zM479 530h1v1h-1zM483 530h1v1h-1zM487 530h1v1h-1zM491 530h1v1h-1zM495 530h1v1h-1zM499 530h1v1h-1zM503 530h1v1h-1zM507 530h1v1h-1zM511 530h1v1h-1zM515 530h1v1h-1zM519 530h1v1h-1zM523 530h1v1h-1zM527 530h1v1h-1zM531 530h1v1h-1zM535 530h1v1h-1zM539 530h1v1h-1zM543 530h1v1h-1zM547 530h1v1h-1zM551 530h1v1h-1zM555 530h1v1h-1zM559 530h1v1h-1zM563 530h1v1h-1zM567 530h1v1h-1zM571 530h1v1h-1zM575 530h1v1h-1zM579 530h1v1h-1zM583 530h1v1h-1zM587 530h1v1h-1zM591 530h1v1h-1zM595 530h1v1h-1zM599 530h1v1h-1zM603 530h1v1h-1zM607 530h1v1h-1zM611 530h1v1h-1zM615 530h1v1h-1zM619 530h1v1h-1zM623 530h1v1h-1zM627 530h1v1h-1zM631 530h1v1h-1zM635 530h1v1h-1zM639 530h1v1h-1zM643 530h1v1h-1zM647 530h1v1h-1zM651 530h1v1h-1zM655 530h1v1h-1zM659 530h1v1h-1zM663 530h1v1h-1zM667 530h1v1h-1zM671 530h1v1h-1zM675 530h1v1h-1zM679 530h1v1h-1zM683 530h1v1h-1zM687 530h1v1h-1zM691 530h1v1h-1zM695 530h1v1h-1zM699 530h1v1h-1zM703 530h1v1h-1zM707 530h1v1h-1zM711 530h1v1h-1zM715 530h1v1h-1zM719 530h1v1h-1zM723 530h1v1h-1zM727 530h1v1h-1zM731 530h1v1h-1zM735 530h1v1h-1zM739 530h1v1h-1zM743 530h1v1h-1zM747 530h1v1h-1zM751 530h1v1h-1zM755 530h1v1h-1zM759 530h1v1h-1zM763 530h1v1h-1zM767 530h1v1h-1zM771 530h1v1h-1zM775 530h1v1h-1zM779 530h1v1h-1zM783 530h1v1h-1zM787 530h1v1h-1zM791 530h1v1h-1zM795 530h1v1h-1zM799 530h1v1h-1zM803 530h1v1h-1zM807 530h1v1h-1zM811 530h1v1h-1zM815 530h1v1h-1zM819 530h1v1h-1zM823 530h1v1h-1zM827 530h1v1h-1zM831 530h1v1h-1zM835 530h1v1h-1zM839 530h1v1h-1zM843 530h1v1h-1zM847 530h1v1h-1zM851 530h1v1h-1zM855 530h1v1h-1zM859 530h1v1h-1zM863 530h1v1h-1zM867 530h1v1h-1zM871 530h1v1h-1zM875 530h1v1h-1zM879 530h1v1h-1zM883 530h1v1h-1zM887 530h1v1h-1zM891 530h1v1h-1zM895 530h1v1h-1zM899 530h1v1h-1zM903 530h1v1h-1zM907 530h1v1h-1zM911 530h1v1h-1zM915 530h1v1h-1zM919 530h1v1h-1zM923 530h1v1h-1zM927 530h1v1h-1zM931 530h1v1h-1zM935 530h1v1h-1zM939 530h1v1h-1zM943 530h1v1h-1zM947 530h1v1h-1zM951 530h1v1h-1zM955 530h1v1h-1zM959 530h1v1h-1zM963 530h1v1h-1zM967 530h1v1h-1zM971 530h1v1h-1zM975 530h1v1h-1zM979 530h1v1h-1zM983 530h1v1h-1zM987 530h1v1h-1zM991 530h1v1h-1zM995 530h1v1h-1zM999 530h1v1h-1zM1003 530h1v1h-1zM1007 530h1v1h-1zM1011 530h1v1h-1zM1015 530h1v1h-1zM1019 530h1v1h-1zM1023 530h1v1h-1zM1027 530h1v1h-1zM1031 530h1v1h-1zM1035 530h1v1h-1zM1039 530h1v1h-1zM1043 530h1v1h-1zM1047 530h1v1h-1zM1051 530h1v1h-1zM1055 530h1v1h-1zM1059 530h1v1h-1zM1063 530h1v1h-1z" fill="#800000"/><rect x="1066" y="530" width="4" height="1" fill="#ff0000"/><path d="M39 550h1v1h-1zM43 550h1v1h-1zM47 550h1v1h-1zM51 550h1v1h-1zM55 550h1v1h-1zM59 550h1v1h-1zM63 550h1v1h-1zM67 550h1v1h-1zM71 550h1v1h-1zM75 550h1v1h-1zM79 550h1v1h-1zM83 550h1v1h-1zM87 550h1v1h-1zM91 550h1v1h-1zM95 550h1v1h-1zM99 550h1v1h-1zM103 550h1v1h-1zM107 550h1v1h-1zM111 550h1v1h-1zM115 550h1v1h-1zM119 550h1v1h-1zM123 550h1v1h-1zM127 550h1v1h-1zM131 550h1v1h-1zM135 550h1v1h-1zM139 550h1v1h-1zM143 550h1v1h-1zM147 550h1v1h-1zM151 550h1v1h-1zM155 550h1v1h-1zM159 550h1v1h-1zM163 550h1v1h-1zM167 550h1v1h-1zM171 550h1v1h-1zM175 550h1v1h-1zM179 550h1v1h-1zM183 550h1v1h-1zM187 550h1v1h-1zM191 550h1v1h-1zM195 550h1v1h-1zM199 550h1v1h-1zM203 550h1v1h-1zM207 550h1v1h-1zM211 550h1v1h-1zM215 550h1v1h-1zM219 550h1v1h-1zM223 550h1v1h-1zM227 550h1v1h-1zM231 550h1v1h-1zM235 550h1v1h-1zM239 550h1v1h-1zM243 550h1v1h-1zM247 550h1v1h-1zM251 550h1v1h-1zM255 550h1v1h-1zM259 550h1v1h-1zM263 550h1v1h-1zM267 550h1v1h-1zM271 550h1v1h-1zM275 550h1v1h-1zM279 550h1v1h-1zM283 550h1v1h-1zM287 550h1v1h-1zM291 550h1v1h-1zM295 550h1v1h-1zM299 550h1v1h-1zM303 550h1v1h-1zM307 550h1v1h-1zM311 550h1v1h-1zM315 550h1v1h-1zM319 550h1v1h-1zM323 550h1v1h-1zM327 550h1v1h-1zM331 550h1v1h-1zM335 550h1v1h-1zM339 550h1v1h-1zM343 550h1v1h-1zM347 550h1v1h-1zM351 550h1v1h-1zM355 550h1v1h-1zM359 550h1v1h-1zM363 550h1v1h-1zM367 550h1v1h-1zM371 550h1v1h-1zM375 550h1v1h-1zM379 550h1v1h-1zM383 550h1v1h-1zM387 550h1v1h-1zM391 550h1v1h-1zM395 550h1v1h-1zM399 550h1v1h-1zM403 550h1v1h-1zM407 550h1v1h-1zM411 550h1v1h-1zM415 550h1v1h-1zM419 550h1v1h-1zM423 550h1v1h-1zM427 550h1v1h-1zM431 550h1v1h-1zM435 550h1v1h-1zM439 550h1v1h-1zM443 550h1v1h-1zM447 550h1v1h-1zM451 550h1v1h-1zM455 550h1v1h-1zM459 550h1v1h-1zM463 550h1v1h-1zM467 550h1v1h-1zM471 550h1v1h-1zM475 550h1v1h-1zM479 550h1v1h-1zM483 550h1v1h-1zM487 550h1v1h-1zM491 550h1v1h-1zM495 550h1v1h-1zM499 550h1v1h-1zM503 550h1v1h-1zM507 550h1v1h-1zM511 550h1v1h-1zM515 550h1v1h-1zM519 550h1v1h-1zM523 550h1v1h-1zM527 550h1v1h-1zM531 550h1v1h-1zM535 550h1v1h-1zM539 550h1v1h-1zM543 550h1v1h-1zM547 550h1v1h-1zM551 550h1v1h-1zM555 550h1v1h-1zM559 550h1v1h-1zM563 550h1v1h-1zM567 550h1v1h-1zM571 550h1v1h-1zM575 550h1v1h-1zM579 550h1v1h-1zM583 550h1v1h-1zM587 550h1v1h-1zM591 550h1v1h-1zM595 550h1v1h-1zM599 550h1v1h-1zM603 550h1v1h-1zM607 550h1v1h-1zM611 550h1v1h-1zM615 550h1v1h-1zM619 550h1v1h-1zM623 550h1v1h-1zM627 550h1v1h-1zM631 550h1v1h-1zM635 550h1v1h-1zM639 550h1v1h-1zM643 550h1v1h-1zM647 550h1v1h-1zM651 550h1v1h-1zM655 550h1v1h-1zM659 550h1v1h-1zM663 550h1v1h-1zM667 550h1v1h-1zM671 550h1v1h-1zM675 550h1v1h-1zM679 550h1v1h-1zM683 550h1v1h-1zM687 550h1v1h-1zM691 550h1v1h-1zM695 550h1v1h-1zM699 550h1v1h-1zM703 550h1v1h-1zM707 550h1v1h-1zM711 550h1v1h-1zM715 550h1v1h-1zM719 550h1v1h-1zM723 550h1v1h-1zM727 550h1v1h-1zM731 550h1v1h-1zM735 550h1v1h-1zM739 550h1v1h-1zM743 550h1v1h-1zM747 550h1v1h-1zM751 550h1v1h-1zM755 550h1v1h-1zM759 550h1v1h-1zM763 550h1v1h-1zM767 550h1v1h-1zM771 550h1v1h-1zM775 550h1v1h-1zM779 550h1v1h-1zM783 550h1v1h-1zM787 550h1v1h-1zM791 550h1v1h-1zM795 550h1v1h-1zM799 550h1v1h-1zM803 550h1v1h-1zM807 550h1v1h-1zM811 550h1v1h-1zM815 550h1v1h-1zM819 550h1v1h-1zM823 550h1v1h-1zM827 550h1v1h-1zM831 550h1v1h-1zM835 550h1v1h-1zM839 550h1v1h-1zM843 550h1v1h-1zM847 550h1v1h-1zM851 550h1v1h-1zM855 550h1v1h-1zM859 550h1v1h-1zM863 550h1v1h-1zM867 550h1v1h-1zM871 550h1v1h-1zM875 550h1v1h-1zM879 550h1v1h-1zM883 550h1v1h-1zM887 550h1v1h-1zM891 550h1v1h-1zM895 550h1v1h-1zM899 550h1v1h-1zM903 550h1v1h-1zM907 550h1v1h-1zM911 550h1v1h-1zM915 550h1v1h-1zM919 550h1v1h-1zM923 550h1v1h-1zM927 550h1v1h-1zM931 550h1v1h-1zM935 550h1v1h-1zM939 550h1v1h-1zM943 550h1v1h-1zM947 550h1v1h-1zM951 550h1v1h-1zM955 550h1v1h-1zM959 550h1v1h-1zM963 550h1v1h-1zM967 550h1v1h-1zM971 550h1v1h-1zM975 550h1v1h-1zM979 550h1v1h-1zM983 550h1v1h-1zM987 550h1v1h-1zM991 550h1v1h-1zM995 550h1v1h-1zM999 550h1v1h-1zM1003 550h1v1h-1zM1007 550h1v1h-1zM1011 550h1v1h-1zM1015 550h1v1h-1zM1019 550h1v1h-1zM1023 550h1v1h-1zM1027 550h1v1h-1zM1031 550h1v1h-1zM1035 550h1v1h-1zM1039 550h1v1h-1zM1043 550h1v1h-1zM1047 550h1v1h-1zM1051 550h1v1h-1zM1055 550h1v1h-1zM1059 550h1v1h-1zM1063 550h1v1h-1z" fill="#800000"/><rect x="1066" y="550" width="4" height="1" fill="#ff0000"/><path d="M39 590h1v1h-1zM43 590h1v1h-1zM47 590h1v1h-1zM51 590h1v1h-1zM55 590h1v1h-1zM59 590h1v1h-1zM63 590h1v1h-1zM67 590h1v1h-1zM71 590h1v1h-1zM75 590h1v1h-1zM79 590h1v1h-1zM83 590h1v1h-1zM87 590h1v1h-1zM91 590h1v1h-1zM95 590h1v1h-1zM99 590h1v1h-1zM103 590h1v1h-1zM107 590h1v1h-1zM111 590h1v1h-1zM115 590h1v1h-1zM119 590h1v1h-1zM123 590h1v1h-1zM127 590h1v1h-1zM131 590h1v1h-1zM135 590h1v1h-1zM139 590h1v1h-1zM143 590h1v1h-1zM147 590h1v1h-1zM151 590h1v1h-1zM155 590h1v1h-1zM159 590h1v1h-1zM163 590h1v1h-1zM167 590h1v1h-1zM171 590h1v1h-1zM175 590h1v1h-1zM179 590h1v1h-1zM183 590h1v1h-1zM187 590h1v1h-1zM191 590h1v1h-1zM195 590h1v1h-1zM199 590h1v1h-1zM203 590h1v1h-1zM207 590h1v1h-1zM211 590h1v1h-1zM215 590h1v1h-1zM219 590h1v1h-1zM223 590h1v1h-1zM227 590h1v1h-1zM231 590h1v1h-1zM235 590h1v1h-1zM239 590h1v1h-1zM243 590h1v1h-1zM247 590h1v1h-1zM251 590h1v1h-1zM255 590h1v1h-1zM259 590h1v1h-1zM263 590h1v1h-1zM267 590h1v1h-1zM271 590h1v1h-1zM275 590h1v1h-1zM279 590h1v1h-1zM283 590h1v1h-1zM287 590h1v1h-1zM291 590h1v1h-1zM295 590h1v1h-1zM299 590h1v1h-1zM303 590h1v1h-1zM307 590h1v1h-1zM311 590h1v1h-1zM315 590h1v1h-1zM319 590h1v1h-1zM323 590h1v1h-1zM327 590h1v1h-1zM331 590h1v1h-1zM335 590h1v1h-1zM339 590h1v1h-1zM343 590h1v1h-1zM347 590h1v1h-1zM351 590h1v1h-1zM355 590h1v1h-1zM359 590h1v1h-1zM363 590h1v1h-1zM367 590h1v1h-1zM371 590h1v1h-1zM375 590h1v1h-1zM379 590h1v1h-1zM383 590h1v1h-1zM387 590h1v1h-1zM391 590h1v1h-1zM395 590h1v1h-1zM399 590h1v1h-1zM403 590h1v1h-1zM407 590h1v1h-1zM411 590h1v1h-1zM415 590h1v1h-1zM419 590h1v1h-1zM423 590h1v1h-1zM427 590h1v1h-1zM431 590h1v1h-1zM435 590h1v1h-1zM439 590h1v1h-1zM443 590h1v1h-1zM447 590h1v1h-1zM451 590h1v1h-1zM455 590h1v1h-1zM459 590h1v1h-1zM463 590h1v1h-1zM467 590h1v1h-1zM471 590h1v1h-1zM475 590h1v1h-1zM479 590h1v1h-1zM483 590h1v1h-1zM487 590h1v1h-1zM491 590h1v1h-1zM495 590h1v1h-1zM499 590h1v1h-1zM503 590h1v1h-1zM507 590h1v1h-1zM511 590h1v1h-1zM515 590h1v1h-1zM519 590h1v1h-1zM523 590h1v1h-1zM527 590h1v1h-1zM531 590h1v1h-1zM535 590h1v1h-1zM539 590h1v1h-1zM543 590h1v1h-1zM547 590h1v1h-1zM551 590h1v1h-1zM555 590h1v1h-1zM559 590h1v1h-1zM563 590h1v1h-1zM567 590h1v1h-1zM571 590h1v1h-1zM575 590h1v1h-1zM579 590h1v1h-1zM583 590h1v1h-1zM587 590h1v1h-1zM591 590h1v1h-1zM595 590h1v1h-1zM599 590h1v1h-1zM603 590h1v1h-1zM607 590h1v1h-1zM611 590h1v1h-1zM615 590h1v1h-1zM619 590h1v1h-1zM623 590h1v1h-1zM627 590h1v1h-1zM631 590h1v1h-1zM635 590h1v1h-1zM639 590h1v1h-1zM643 590h1v1h-1zM647 590h1v1h-1zM651 590h1v1h-1zM655 590h1v1h-1zM659 590h1v1h-1zM663 590h1v1h-1zM667 590h1v1h-1zM671 590h1v1h-1zM675 590h1v1h-1zM679 590h1v1h-1zM683 590h1v1h-1zM687 590h1v1h-1zM691 590h1v1h-1zM695 590h1v1h-1zM699 590h1v1h-1zM703 590h1v1h-1zM707 590h1v1h-1zM711 590h1v1h-1zM715 590h1v1h-1zM719 590h1v1h-1zM723 590h1v1h-1zM727 590h1v1h-1zM731 590h1v1h-1zM735 590h1v1h-1zM739 590h1v1h-1zM743 590h1v1h-1zM747 590h1v1h-1zM751 590h1v1h-1zM755 590h1v1h-1zM759 590h1v1h-1zM763 590h1v1h-1zM767 590h1v1h-1zM771 590h1v1h-1zM775 590h1v1h-1zM779 590h1v1h-1zM783 590h1v1h-1zM787 590h1v1h-1zM791 590h1v1h-1zM795 590h1v1h-1zM799 590h1v1h-1zM803 590h1v1h-1zM807 590h1v1h-1zM811 590h1v1h-1zM815 590h1v1h-1zM819 590h1v1h-1zM823 590h1v1h-1zM827 590h1v1h-1zM831 590h1v1h-1zM835 590h1v1h-1zM839 590h1v1h-1zM843 590h1v1h-1zM847 590h1v1h-1zM851 590h1v1h-1zM855 590h1v1h-1zM859 590h1v1h-1zM863 590h1v1h-1zM867 590h1v1h-1zM871 590h1v1h-1zM875 590h1v1h-1zM879 590h1v1h-1zM883 590h1v1h-1zM887 590h1v1h-1zM891 590h1v1h-1zM895 590h1v1h-1zM899 590h1v1h-1zM903 590h1v1h-1zM907 590h1v1h-1zM911 590h1v1h-1zM915 590h1v1h-1zM919 590h1v1h-1zM923 590h1v1h-1zM927 590h1v1h-1zM931 590h1v1h-1zM935 590h1v1h-1zM939 590h1v1h-1zM943 590h1v1h-1zM947 590h1v1h-1zM951 590h1v1h-1zM955 590h1v1h-1zM959 590h1v1h-1zM963 590h1v1h-1zM967 590h1v1h-1zM971 590h1v1h-1zM975 590h1v1h-1zM979 590h1v1h-1zM983 590h1v1h-1zM987 590h1v1h-1zM991 590h1v1h-1zM995 590h1v1h-1zM999 590h1v1h-1zM1003 590h1v1h-1zM1007 590h1v1h-1zM1011 590h1v1h-1zM1015 590h1v1h-1zM1019 590h1v1h-1zM1023 590h1v1h-1zM1027 590h1v1h-1zM1031 590h1v1h-1zM1035 590h1v1h-1zM1039 590h1v1h-1zM1043 590h1v1h-1zM1047 590h1v1h-1zM1051 590h1v1h-1zM1055 590h1v1h-1zM1059 590h1v1h-1zM1063 590h1v1h-1z" fill="#800000"/><rect x="1066" y="590" width="4" height="1" fill="#ff0000"/><path d="M39 610h1v1h-1zM43 610h1v1h-1zM47 610h1v1h-1zM51 610h1v1h-1zM55 610h1v1h-1zM59 610h1v1h-1zM63 610h1v1h-1zM67 610h1v1h-1zM71 610h1v1h-1zM75 610h1v1h-1zM79 610h1v1h-1zM83 610h1v1h-1zM87 610h1v1h-1zM91 610h1v1h-1zM95 610h1v1h-1zM99 610h1v1h-1zM103 610h1v1h-1zM107 610h1v1h-1zM111 610h1v1h-1zM115 610h1v1h-1zM119 610h1v1h-1zM123 610h1v1h-1zM127 610h1v1h-1zM131 610h1v1h-1zM135 610h1v1h-1zM139 610h1v1h-1zM143 610h1v1h-1zM147 610h1v1h-1zM151 610h1v1h-1zM155 610h1v1h-1zM159 610h1v1h-1zM163 610h1v1h-1zM167 610h1v1h-1zM171 610h1v1h-1zM175 610h1v1h-1zM179 610h1v1h-1zM183 610h1v1h-1zM187 610h1v1h-1zM191 610h1v1h-1zM195 610h1v1h-1zM199 610h1v1h-1zM203 610h1v1h-1zM207 610h1v1h-1zM211 610h1v1h-1zM215 610h1v1h-1zM219 610h1v1h-1zM223 610h1v1h-1zM227 610h1v1h-1zM231 610h1v1h-1zM235 610h1v1h-1zM239 610h1v1h-1zM243 610h1v1h-1zM247 610h1v1h-1zM251 610h1v1h-1zM255 610h1v1h-1zM259 610h1v1h-1zM263 610h1v1h-1zM267 610h1v1h-1zM271 610h1v1h-1zM275 610h1v1h-1zM279 610h1v1h-1zM283 610h1v1h-1zM287 610h1v1h-1zM291 610h1v1h-1zM295 610h1v1h-1zM299 610h1v1h-1zM303 610h1v1h-1zM307 610h1v1h-1zM311 610h1v1h-1zM315 610h1v1h-1zM319 610h1v1h-1zM323 610h1v1h-1zM327 610h1v1h-1zM331 610h1v1h-1zM335 610h1v1h-1zM339 610h1v1h-1zM343 610h1v1h-1zM347 610h1v1h-1zM351 610h1v1h-1zM355 610h1v1h-1zM359 610h1v1h-1zM363 610h1v1h-1zM367 610h1v1h-1zM371 610h1v1h-1zM375 610h1v1h-1zM379 610h1v1h-1zM383 610h1v1h-1zM387 610h1v1h-1zM391 610h1v1h-1zM395 610h1v1h-1zM399 610h1v1h-1zM403 610h1v1h-1zM407 610h1v1h-1zM411 610h1v1h-1zM415 610h1v1h-1zM419 610h1v1h-1zM423 610h1v1h-1zM427 610h1v1h-1zM431 610h1v1h-1zM435 610h1v1h-1zM439 610h1v1h-1zM443 610h1v1h-1zM447 610h1v1h-1zM451 610h1v1h-1zM455 610h1v1h-1zM459 610h1v1h-1zM463 610h1v1h-1zM467 610h1v1h-1zM471 610h1v1h-1zM475 610h1v1h-1zM479 610h1v1h-1zM483 610h1v1h-1zM487 610h1v1h-1zM491 610h1v1h-1zM495 610h1v1h-1zM499 610h1v1h-1zM503 610h1v1h-1zM507 610h1v1h-1zM511 610h1v1h-1zM515 610h1v1h-1zM519 610h1v1h-1zM523 610h1v1h-1zM527 610h1v1h-1zM531 610h1v1h-1zM535 610h1v1h-1zM539 610h1v1h-1zM543 610h1v1h-1zM547 610h1v1h-1zM551 610h1v1h-1zM555 610h1v1h-1zM559 610h1v1h-1zM563 610h1v1h-1zM567 610h1v1h-1zM571 610h1v1h-1zM575 610h1v1h-1zM579 610h1v1h-1zM583 610h1v1h-1zM587 610h1v1h-1zM591 610h1v1h-1zM595 610h1v1h-1zM599 610h1v1h-1zM603 610h1v1h-1zM607 610h1v1h-1zM611 610h1v1h-1zM615 610h1v1h-1zM619 610h1v1h-1zM623 610h1v1h-1zM627 610h1v1h-1zM631 610h1v1h-1zM635 610h1v1h-1zM639 610h1v1h-1zM643 610h1v1h-1zM647 610h1v1h-1zM651 610h1v1h-1zM655 610h1v1h-1zM659 610h1v1h-1zM663 610h1v1h-1zM667 610h1v1h-1zM671 610h1v1h-1zM675 610h1v1h-1zM679 610h1v1h-1zM683 610h1v1h-1zM687 610h1v1h-1zM691 610h1v1h-1zM695 610h1v1h-1zM699 610h1v1h-1zM703 610h1v1h-1zM707 610h1v1h-1zM711 610h1v1h-1zM715 610h1v1h-1zM719 610h1v1h-1zM723 610h1v1h-1zM727 610h1v1h-1zM731 610h1v1h-1zM735 610h1v1h-1zM739 610h1v1h-1zM743 610h1v1h-1zM747 610h1v1h-1zM751 610h1v1h-1zM755 610h1v1h-1zM759 610h1v1h-1zM763 610h1v1h-1zM767 610h1v1h-1zM771 610h1v1h-1zM775 610h1v1h-1zM779 610h1v1h-1zM783 610h1v1h-1zM787 610h1v1h-1zM791 610h1v1h-1zM795 610h1v1h-1zM799 610h1v1h-1zM803 610h1v1h-1zM807 610h1v1h-1zM811 610h1v1h-1zM815 610h1v1h-1zM819 610h1v1h-1zM823 610h1v1h-1zM827 610h1v1h-1zM831 610h1v1h-1zM835 610h1v1h-1zM839 610h1v1h-1zM843 610h1v1h-1zM847 610h1v1h-1zM851 610h1v1h-1zM855 610h1v1h-1zM859 610h1v1h-1zM863 610h1v1h-1zM867 610h1v1h-1zM871 610h1v1h-1zM875 610h1v1h-1zM879 610h1v1h-1zM883 610h1v1h-1zM887 610h1v1h-1zM891 610h1v1h-1zM895 610h1v1h-1zM899 610h1v1h-1zM903 610h1v1h-1zM907 610h1v1h-1zM911 610h1v1h-1zM915 610h1v1h-1zM919 610h1v1h-1zM923 610h1v1h-1zM927 610h1v1h-1zM931 610h1v1h-1zM935 610h1v1h-1zM939 610h1v1h-1zM943 610h1v1h-1zM947 610h1v1h-1zM951 610h1v1h-1zM955 610h1v1h-1zM959 610h1v1h-1zM963 610h1v1h-1zM967 610h1v1h-1zM971 610h1v1h-1zM975 610h1v1h-1zM979 610h1v1h-1zM983 610h1v1h-1zM987 610h1v1h-1zM991 610h1v1h-1zM995 610h1v1h-1zM999 610h1v1h-1zM1003 610h1v1h-1zM1007 610h1v1h-1zM1011 610h1v1h-1zM1015 610h1v1h-1zM1019 610h1v1h-1zM1023 610h1v1h-1zM1027 610h1v1h-1zM1031 610h1v1h-1zM1035 610h1v1h-1zM1039 610h1v1h-1zM1043 610h1v1h-1zM1047 610h1v1h-1zM1051 610h1v1h-1zM1055 610h1v1h-1zM1059 610h1v1h-1zM1063 610h1v1h-1z" fill="#800000"/><rect x="1066" y="610" width="4" height="1" fill="#ff0000"/><rect x="39" y="570" width="1018" height="1" fill="#ffffff"/><rect x="1066" y="570" width="4" height="1" fill="#ff0000"/><rect x="38" y="618" width="1070" height="1" fill="#ff0000"/><path d="M39 636h1v1h-1zM43 636h1v1h-1zM47 636h1v1h-1zM51 636h1v1h-1zM55 636h1v1h-1zM59 636h1v1h-1zM63 636h1v1h-1zM67 636h1v1h-1zM71 636h1v1h-1zM75 636h1v1h-1zM79 636h1v1h-1zM83 636h1v1h-1zM87 636h1v1h-1zM91 636h1v1h-1zM95 636h1v1h-1zM99 636h1v1h-1zM103 636h1v1h-1zM107 636h1v1h-1zM111 636h1v1h-1zM115 636h1v1h-1zM119 636h1v1h-1zM123 636h1v1h-1zM127 636h1v1h-1zM131 636h1v1h-1zM135 636h1v1h-1zM139 636h1v1h-1zM143 636h1v1h-1zM147 636h1v1h-1zM151 636h1v1h-1zM155 636h1v1h-1zM159 636h1v1h-1zM163 636h1v1h-1zM167 636h1v1h-1zM171 636h1v1h-1zM175 636h1v1h-1zM179 636h1v1h-1zM183 636h1v1h-1zM187 636h1v1h-1zM191 636h1v1h-1zM195 636h1v1h-1zM199 636h1v1h-1zM203 636h1v1h-1zM207 636h1v1h-1zM211 636h1v1h-1zM215 636h1v1h-1zM219 636h1v1h-1zM223 636h1v1h-1zM227 636h1v1h-1zM231 636h1v1h-1zM235 636h1v1h-1zM239 636h1v1h-1zM243 636h1v1h-1zM247 636h1v1h-1zM251 636h1v1h-1zM255 636h1v1h-1zM259 636h1v1h-1zM263 636h1v1h-1zM267 636h1v1h-1zM271 636h1v1h-1zM275 636h1v1h-1zM279 636h1v1h-1zM283 636h1v1h-1zM287 636h1v1h-1zM291 636h1v1h-1zM295 636h1v1h-1zM299 636h1v1h-1zM303 636h1v1h-1zM307 636h1v1h-1zM311 636h1v1h-1zM315 636h1v1h-1zM319 636h1v1h-1zM323 636h1v1h-1zM327 636h1v1h-1zM331 636h1v1h-1zM335 636h1v1h-1zM339 636h1v1h-1zM343 636h1v1h-1zM347 636h1v1h-1zM351 636h1v1h-1zM355 636h1v1h-1zM359 636h1v1h-1zM363 636h1v1h-1zM367 636h1v1h-1zM371 636h1v1h-1zM375 636h1v1h-1zM379 636h1v1h-1zM383 636h1v1h-1zM387 636h1v1h-1zM391 636h1v1h-1zM395 636h1v1h-1zM399 636h1v1h-1zM403 636h1v1h-1zM407 636h1v1h-1zM411 636h1v1h-1zM415 636h1v1h-1zM419 636h1v1h-1zM423 636h1v1h-1zM427 636h1v1h-1zM431 636h1v1h-1zM435 636h1v1h-1zM439 636h1v1h-1zM443 636h1v1h-1zM447 636h1v1h-1zM451 636h1v1h-1zM455 636h1v1h-1zM459 636h1v1h-1zM463 636h1v1h-1zM467 636h1v1h-1zM471 636h1v1h-1zM475 636h1v1h-1zM479 636h1v1h-1zM483 636h1v1h-1zM487 636h1v1h-1zM491 636h1v1h-1zM495 636h1v1h-1zM499 636h1v1h-1zM503 636h1v1h-1zM507 636h1v1h-1zM511 636h1v1h-1zM515 636h1v1h-1zM519 636h1v1h-1zM523 636h1v1h-1zM527 636h1v1h-1zM531 636h1v1h-1zM535 636h1v1h-1zM539 636h1v1h-1zM543 636h1v1h-1zM547 636h1v1h-1zM551 636h1v1h-1zM555 636h1v1h-1zM559 636h1v1h-1zM563 636h1v1h-1zM567 636h1v1h-1zM571 636h1v1h-1zM575 636h1v1h-1zM579 636h1v1h-1zM583 636h1v1h-1zM587 636h1v1h-1zM591 636h1v1h-1zM595 636h1v1h-1zM599 636h1v1h-1zM603 636h1v1h-1zM607 636h1v1h-1zM611 636h1v1h-1zM615 636h1v1h-1zM619 636h1v1h-1zM623 636h1v1h-1zM627 636h1v1h-1zM631 636h1v1h-1zM635 636h1v1h-1zM639 636h1v1h-1zM643 636h1v1h-1zM647 636h1v1h-1zM651 636h1v1h-1zM655 636h1v1h-1zM659 636h1v1h-1zM663 636h1v1h-1zM667 636h1v1h-1zM671 636h1v1h-1zM675 636h1v1h-1zM679 636h1v1h-1zM683 636h1v1h-1zM687 636h1v1h-1zM691 636h1v1h-1zM695 636h1v1h-1zM699 636h1v1h-1zM703 636h1v1h-1zM707 636h1v1h-1zM711 636h1v1h-1zM715 636h1v1h-1zM719 636h1v1h-1zM723 636h1v1h-1zM727 636h1v1h-1zM731 636h1v1h-1zM735 636h1v1h-1zM739 636h1v1h-1zM743 636h1v1h-1zM747 636h1v1h-1zM751 636h1v1h-1zM755 636h1v1h-1zM759 636h1v1h-1zM763 636h1v1h-1zM767 636h1v1h-1zM771 636h1v1h-1zM775 636h1v1h-1zM779 636h1v1h-1zM783 636h1v1h-1zM787 636h1v1h-1zM791 636h1v1h-1zM795 636h1v1h-1zM799 636h1v1h-1zM803 636h1v1h-1zM807 636h1v1h-1zM811 636h1v1h-1zM815 636h1v1h-1zM819 636h1v1h-1zM823 636h1v1h-1zM827 636h1v1h-1zM831 636h1v1h-1zM835 636h1v1h-1zM839 636h1v1h-1zM843 636h1v1h-1zM847 636h1v1h-1zM851 636h1v1h-1zM855 636h1v1h-1zM859 636h1v1h-1zM863 636h1v1h-1zM867 636h1v1h-1zM871 636h1v1h-1zM875 636h1v1h-1zM879 636h1v1h-1zM883 636h1v1h-1zM887 636h1v1h-1zM891 636h1v1h-1zM895 636h1v1h-1zM899 636h1v1h-1zM903 636h1v1h-1zM907 636h1v1h-1zM911 636h1v1h-1zM915 636h1v1h-1zM919 636h1v1h-1zM923 636h1v1h-1zM927 636h1v1h-1zM931 636h1v1h-1zM935 636h1v1h-1zM939 636h1v1h-1zM943 636h1v1h-1zM947 636h1v1h-1zM951 636h1v1h-1zM955 636h1v1h-1zM959 636h1v1h-1zM963 636h1v1h-1zM967 636h1v1h-1zM971 636h1v1h-1zM975 636h1v1h-1zM979 636h1v1h-1zM983 636h1v1h-1zM987 636h1v1h-1zM991 636h1v1h-1zM995 636h1v1h-1zM999 636h1v1h-1zM1003 636h1v1h-1zM1007 636h1v1h-1zM1011 636h1v1h-1zM1015 636h1v1h-1zM1019 636h1v1h-1zM1023 636h1v1h-1zM1027 636h1v1h-1zM1031 636h1v1h-1zM1035 636h1v1h-1zM1039 636h1v1h-1zM1043 636h1v1h-1zM1047 636h1v1h-1zM1051 636h1v1h-1zM1055 636h1v1h-1zM1059 636h1v1h-1zM1063 636h1v1h-1z" fill="#800000"/><rect x="1066" y="636" width="4" height="1" fill="#ff0000"/><path d="M39 675h1v1h-1zM43 675h1v1h-1zM47 675h1v1h-1zM51 675h1v1h-1zM55 675h1v1h-1zM59 675h1v1h-1zM63 675h1v1h-1zM67 675h1v1h-1zM71 675h1v1h-1zM75 675h1v1h-1zM79 675h1v1h-1zM83 675h1v1h-1zM87 675h1v1h-1zM91 675h1v1h-1zM95 675h1v1h-1zM99 675h1v1h-1zM103 675h1v1h-1zM107 675h1v1h-1zM111 675h1v1h-1zM115 675h1v1h-1zM119 675h1v1h-1zM123 675h1v1h-1zM127 675h1v1h-1zM131 675h1v1h-1zM135 675h1v1h-1zM139 675h1v1h-1zM143 675h1v1h-1zM147 675h1v1h-1zM151 675h1v1h-1zM155 675h1v1h-1zM159 675h1v1h-1zM163 675h1v1h-1zM167 675h1v1h-1zM171 675h1v1h-1zM175 675h1v1h-1zM179 675h1v1h-1zM183 675h1v1h-1zM187 675h1v1h-1zM191 675h1v1h-1zM195 675h1v1h-1zM199 675h1v1h-1zM203 675h1v1h-1zM207 675h1v1h-1zM211 675h1v1h-1zM215 675h1v1h-1zM219 675h1v1h-1zM223 675h1v1h-1zM227 675h1v1h-1zM231 675h1v1h-1zM235 675h1v1h-1zM239 675h1v1h-1zM243 675h1v1h-1zM247 675h1v1h-1zM251 675h1v1h-1zM255 675h1v1h-1zM259 675h1v1h-1zM263 675h1v1h-1zM267 675h1v1h-1zM271 675h1v1h-1zM275 675h1v1h-1zM279 675h1v1h-1zM283 675h1v1h-1zM287 675h1v1h-1zM291 675h1v1h-1zM295 675h1v1h-1zM299 675h1v1h-1zM303 675h1v1h-1zM307 675h1v1h-1zM311 675h1v1h-1zM315 675h1v1h-1zM319 675h1v1h-1zM323 675h1v1h-1zM327 675h1v1h-1zM331 675h1v1h-1zM335 675h1v1h-1zM339 675h1v1h-1zM343 675h1v1h-1zM347 675h1v1h-1zM351 675h1v1h-1zM355 675h1v1h-1zM359 675h1v1h-1zM363 675h1v1h-1zM367 675h1v1h-1zM371 675h1v1h-1zM375 675h1v1h-1zM379 675h1v1h-1zM383 675h1v1h-1zM387 675h1v1h-1zM391 675h1v1h-1zM395 675h1v1h-1zM399 675h1v1h-1zM403 675h1v1h-1zM407 675h1v1h-1zM411 675h1v1h-1zM415 675h1v1h-1zM419 675h1v1h-1zM423 675h1v1h-1zM427 675h1v1h-1zM431 675h1v1h-1zM435 675h1v1h-1zM439 675h1v1h-1zM443 675h1v1h-1zM447 675h1v1h-1zM451 675h1v1h-1zM455 675h1v1h-1zM459 675h1v1h-1zM463 675h1v1h-1zM467 675h1v1h-1zM471 675h1v1h-1zM475 675h1v1h-1zM479 675h1v1h-1zM483 675h1v1h-1zM487 675h1v1h-1zM491 675h1v1h-1zM495 675h1v1h-1zM499 675h1v1h-1zM503 675h1v1h-1zM507 675h1v1h-1zM511 675h1v1h-1zM515 675h1v1h-1zM519 675h1v1h-1zM523 675h1v1h-1zM527 675h1v1h-1zM531 675h1v1h-1zM535 675h1v1h-1zM539 675h1v1h-1zM543 675h1v1h-1zM547 675h1v1h-1zM551 675h1v1h-1zM555 675h1v1h-1zM559 675h1v1h-1zM563 675h1v1h-1zM567 675h1v1h-1zM571 675h1v1h-1zM575 675h1v1h-1zM579 675h1v1h-1zM583 675h1v1h-1zM587 675h1v1h-1zM591 675h1v1h-1zM595 675h1v1h-1zM599 675h1v1h-1zM603 675h1v1h-1zM607 675h1v1h-1zM611 675h1v1h-1zM615 675h1v1h-1zM619 675h1v1h-1zM623 675h1v1h-1zM627 675h1v1h-1zM631 675h1v1h-1zM635 675h1v1h-1zM639 675h1v1h-1zM643 675h1v1h-1zM647 675h1v1h-1zM651 675h1v1h-1zM655 675h1v1h-1zM659 675h1v1h-1zM663 675h1v1h-1zM667 675h1v1h-1zM671 675h1v1h-1zM675 675h1v1h-1zM679 675h1v1h-1zM683 675h1v1h-1zM687 675h1v1h-1zM691 675h1v1h-1zM695 675h1v1h-1zM699 675h1v1h-1zM703 675h1v1h-1zM707 675h1v1h-1zM711 675h1v1h-1zM715 675h1v1h-1zM719 675h1v1h-1zM723 675h1v1h-1zM727 675h1v1h-1zM731 675h1v1h-1zM735 675h1v1h-1zM739 675h1v1h-1zM743 675h1v1h-1zM747 675h1v1h-1zM751 675h1v1h-1zM755 675h1v1h-1zM759 675h1v1h-1zM763 675h1v1h-1zM767 675h1v1h-1zM771 675h1v1h-1zM775 675h1v1h-1zM779 675h1v1h-1zM783 675h1v1h-1zM787 675h1v1h-1zM791 675h1v1h-1zM795 675h1v1h-1zM799 675h1v1h-1zM803 675h1v1h-1zM807 675h1v1h-1zM811 675h1v1h-1zM815 675h1v1h-1zM819 675h1v1h-1zM823 675h1v1h-1zM827 675h1v1h-1zM831 675h1v1h-1zM835 675h1v1h-1zM839 675h1v1h-1zM843 675h1v1h-1zM847 675h1v1h-1zM851 675h1v1h-1zM855 675h1v1h-1zM859 675h1v1h-1zM863 675h1v1h-1zM867 675h1v1h-1zM871 675h1v1h-1zM875 675h1v1h-1zM879 675h1v1h-1zM883 675h1v1h-1zM887 675h1v1h-1zM891 675h1v1h-1zM895 675h1v1h-1zM899 675h1v1h-1zM903 675h1v1h-1zM907 675h1v1h-1zM911 675h1v1h-1zM915 675h1v1h-1zM919 675h1v1h-1zM923 675h1v1h-1zM927 675h1v1h-1zM931 675h1v1h-1zM935 675h1v1h-1zM939 675h1v1h-1zM943 675h1v1h-1zM947 675h1v1h-1zM951 675h1v1h-1zM955 675h1v1h-1zM959 675h1v1h-1zM963 675h1v1h-1zM967 675h1v1h-1zM971 675h1v1h-1zM975 675h1v1h-1zM979 675h1v1h-1zM983 675h1v1h-1zM987 675h1v1h-1zM991 675h1v1h-1zM995 675h1v1h-1zM999 675h1v1h-1zM1003 675h1v1h-1zM1007 675h1v1h-1zM1011 675h1v1h-1zM1015 675h1v1h-1zM1019 675h1v1h-1zM1023 675h1v1h-1zM1027 675h1v1h-1zM1031 675h1v1h-1zM1035 675h1v1h-1zM1039 675h1v1h-1zM1043 675h1v1h-1zM1047 675h1v1h-1zM1051 675h1v1h-1zM1055 675h1v1h-1zM1059 675h1v1h-1zM1063 675h1v1h-1z" fill="#800000"/><rect x="1066" y="675" width="4" height="1" fill="#ff0000"/><path d="M39 715h1v1h-1zM43 715h1v1h-1zM47 715h1v1h-1zM51 715h1v1h-1zM55 715h1v1h-1zM59 715h1v1h-1zM63 715h1v1h-1zM67 715h1v1h-1zM71 715h1v1h-1zM75 715h1v1h-1zM79 715h1v1h-1zM83 715h1v1h-1zM87 715h1v1h-1zM91 715h1v1h-1zM95 715h1v1h-1zM99 715h1v1h-1zM103 715h1v1h-1zM107 715h1v1h-1zM111 715h1v1h-1zM115 715h1v1h-1zM119 715h1v1h-1zM123 715h1v1h-1zM127 715h1v1h-1zM131 715h1v1h-1zM135 715h1v1h-1zM139 715h1v1h-1zM143 715h1v1h-1zM147 715h1v1h-1zM151 715h1v1h-1zM155 715h1v1h-1zM159 715h1v1h-1zM163 715h1v1h-1zM167 715h1v1h-1zM171 715h1v1h-1zM175 715h1v1h-1zM179 715h1v1h-1zM183 715h1v1h-1zM187 715h1v1h-1zM191 715h1v1h-1zM195 715h1v1h-1zM199 715h1v1h-1zM203 715h1v1h-1zM207 715h1v1h-1zM211 715h1v1h-1zM215 715h1v1h-1zM219 715h1v1h-1zM223 715h1v1h-1zM227 715h1v1h-1zM231 715h1v1h-1zM235 715h1v1h-1zM239 715h1v1h-1zM243 715h1v1h-1zM247 715h1v1h-1zM251 715h1v1h-1zM255 715h1v1h-1zM259 715h1v1h-1zM263 715h1v1h-1zM267 715h1v1h-1zM271 715h1v1h-1zM275 715h1v1h-1zM279 715h1v1h-1zM283 715h1v1h-1zM287 715h1v1h-1zM291 715h1v1h-1zM295 715h1v1h-1zM299 715h1v1h-1zM303 715h1v1h-1zM307 715h1v1h-1zM311 715h1v1h-1zM315 715h1v1h-1zM319 715h1v1h-1zM323 715h1v1h-1zM327 715h1v1h-1zM331 715h1v1h-1zM335 715h1v1h-1zM339 715h1v1h-1zM343 715h1v1h-1zM347 715h1v1h-1zM351 715h1v1h-1zM355 715h1v1h-1zM359 715h1v1h-1zM363 715h1v1h-1zM367 715h1v1h-1zM371 715h1v1h-1zM375 715h1v1h-1zM379 715h1v1h-1zM383 715h1v1h-1zM387 715h1v1h-1zM391 715h1v1h-1zM395 715h1v1h-1zM399 715h1v1h-1zM403 715h1v1h-1zM407 715h1v1h-1zM411 715h1v1h-1zM415 715h1v1h-1zM419 715h1v1h-1zM423 715h1v1h-1zM427 715h1v1h-1zM431 715h1v1h-1zM435 715h1v1h-1zM439 715h1v1h-1zM443 715h1v1h-1zM447 715h1v1h-1zM451 715h1v1h-1zM455 715h1v1h-1zM459 715h1v1h-1zM463 715h1v1h-1zM467 715h1v1h-1zM471 715h1v1h-1zM475 715h1v1h-1zM479 715h1v1h-1zM483 715h1v1h-1zM487 715h1v1h-1zM491 715h1v1h-1zM495 715h1v1h-1zM499 715h1v1h-1zM503 715h1v1h-1zM507 715h1v1h-1zM511 715h1v1h-1zM515 715h1v1h-1zM519 715h1v1h-1zM523 715h1v1h-1zM527 715h1v1h-1zM531 715h1v1h-1zM535 715h1v1h-1zM539 715h1v1h-1zM543 715h1v1h-1zM547 715h1v1h-1zM551 715h1v1h-1zM555 715h1v1h-1zM559 715h1v1h-1zM563 715h1v1h-1zM567 715h1v1h-1zM571 715h1v1h-1zM575 715h1v1h-1zM579 715h1v1h-1zM583 715h1v1h-1zM587 715h1v1h-1zM591 715h1v1h-1zM595 715h1v1h-1zM599 715h1v1h-1zM603 715h1v1h-1zM607 715h1v1h-1zM611 715h1v1h-1zM615 715h1v1h-1zM619 715h1v1h-1zM623 715h1v1h-1zM627 715h1v1h-1zM631 715h1v1h-1zM635 715h1v1h-1zM639 715h1v1h-1zM643 715h1v1h-1zM647 715h1v1h-1zM651 715h1v1h-1zM655 715h1v1h-1zM659 715h1v1h-1zM663 715h1v1h-1zM667 715h1v1h-1zM671 715h1v1h-1zM675 715h1v1h-1zM679 715h1v1h-1zM683 715h1v1h-1zM687 715h1v1h-1zM691 715h1v1h-1zM695 715h1v1h-1zM699 715h1v1h-1zM703 715h1v1h-1zM707 715h1v1h-1zM711 715h1v1h-1zM715 715h1v1h-1zM719 715h1v1h-1zM723 715h1v1h-1zM727 715h1v1h-1zM731 715h1v1h-1zM735 715h1v1h-1zM739 715h1v1h-1zM743 715h1v1h-1zM747 715h1v1h-1zM751 715h1v1h-1zM755 715h1v1h-1zM759 715h1v1h-1zM763 715h1v1h-1zM767 715h1v1h-1zM771 715h1v1h-1zM775 715h1v1h-1zM779 715h1v1h-1zM783 715h1v1h-1zM787 715h1v1h-1zM791 715h1v1h-1zM795 715h1v1h-1zM799 715h1v1h-1zM803 715h1v1h-1zM807 715h1v1h-1zM811 715h1v1h-1zM815 715h1v1h-1zM819 715h1v1h-1zM823 715h1v1h-1zM827 715h1v1h-1zM831 715h1v1h-1zM835 715h1v1h-1zM839 715h1v1h-1zM843 715h1v1h-1zM847 715h1v1h-1zM851 715h1v1h-1zM855 715h1v1h-1zM859 715h1v1h-1zM863 715h1v1h-1zM867 715h1v1h-1zM871 715h1v1h-1zM875 715h1v1h-1zM879 715h1v1h-1zM883 715h1v1h-1zM887 715h1v1h-1zM891 715h1v1h-1zM895 715h1v1h-1zM899 715h1v1h-1zM903 715h1v1h-1zM907 715h1v1h-1zM911 715h1v1h-1zM915 715h1v1h-1zM919 715h1v1h-1zM923 715h1v1h-1zM927 715h1v1h-1zM931 715h1v1h-1zM935 715h1v1h-1zM939 715h1v1h-1zM943 715h1v1h-1zM947 715h1v1h-1zM951 715h1v1h-1zM955 715h1v1h-1zM959 715h1v1h-1zM963 715h1v1h-1zM967 715h1v1h-1zM971 715h1v1h-1zM975 715h1v1h-1zM979 715h1v1h-1zM983 715h1v1h-1zM987 715h1v1h-1zM991 715h1v1h-1zM995 715h1v1h-1zM999 715h1v1h-1zM1003 715h1v1h-1zM1007 715h1v1h-1zM1011 715h1v1h-1zM1015 715h1v1h-1zM1019 715h1v1h-1zM1023 715h1v1h-1zM1027 715h1v1h-1zM1031 715h1v1h-1zM1035 715h1v1h-1zM1039 715h1v1h-1zM1043 715h1v1h-1zM1047 715h1v1h-1zM1051 715h1v1h-1zM1055 715h1v1h-1zM1059 715h1v1h-1zM1063 715h1v1h-1z" fill="#800000"/><rect x="1066" y="715" width="4" height="1" fill="#ff0000"/><rect x="38" y="723" width="1070" height="1" fill="#ff0000"/><path d="M39 745h1v1h-1zM43 745h1v1h-1zM47 745h1v1h-1zM51 745h1v1h-1zM55 745h1v1h-1zM59 745h1v1h-1zM63 745h1v1h-1zM67 745h1v1h-1zM71 745h1v1h-1zM75 745h1v1h-1zM79 745h1v1h-1zM83 745h1v1h-1zM87 745h1v1h-1zM91 745h1v1h-1zM95 745h1v1h-1zM99 745h1v1h-1zM103 745h1v1h-1zM107 745h1v1h-1zM111 745h1v1h-1zM115 745h1v1h-1zM119 745h1v1h-1zM123 745h1v1h-1zM127 745h1v1h-1zM131 745h1v1h-1zM135 745h1v1h-1zM139 745h1v1h-1zM143 745h1v1h-1zM147 745h1v1h-1zM151 745h1v1h-1zM155 745h1v1h-1zM159 745h1v1h-1zM163 745h1v1h-1zM167 745h1v1h-1zM171 745h1v1h-1zM175 745h1v1h-1zM179 745h1v1h-1zM183 745h1v1h-1zM187 745h1v1h-1zM191 745h1v1h-1zM195 745h1v1h-1zM199 745h1v1h-1zM203 745h1v1h-1zM207 745h1v1h-1zM211 745h1v1h-1zM215 745h1v1h-1zM219 745h1v1h-1zM223 745h1v1h-1zM227 745h1v1h-1zM231 745h1v1h-1zM235 745h1v1h-1zM239 745h1v1h-1zM243 745h1v1h-1zM247 745h1v1h-1zM251 745h1v1h-1zM255 745h1v1h-1zM259 745h1v1h-1zM263 745h1v1h-1zM267 745h1v1h-1zM271 745h1v1h-1zM275 745h1v1h-1zM279 745h1v1h-1zM283 745h1v1h-1zM287 745h1v1h-1zM291 745h1v1h-1zM295 745h1v1h-1zM299 745h1v1h-1zM303 745h1v1h-1zM307 745h1v1h-1zM311 745h1v1h-1zM315 745h1v1h-1zM319 745h1v1h-1zM323 745h1v1h-1zM327 745h1v1h-1zM331 745h1v1h-1zM335 745h1v1h-1zM339 745h1v1h-1zM343 745h1v1h-1zM347 745h1v1h-1zM351 745h1v1h-1zM355 745h1v1h-1zM359 745h1v1h-1zM363 745h1v1h-1zM367 745h1v1h-1zM371 745h1v1h-1zM375 745h1v1h-1zM379 745h1v1h-1zM383 745h1v1h-1zM387 745h1v1h-1zM391 745h1v1h-1zM395 745h1v1h-1zM399 745h1v1h-1zM403 745h1v1h-1zM407 745h1v1h-1zM411 745h1v1h-1zM415 745h1v1h-1zM419 745h1v1h-1zM423 745h1v1h-1zM427 745h1v1h-1zM431 745h1v1h-1zM435 745h1v1h-1zM439 745h1v1h-1zM443 745h1v1h-1zM447 745h1v1h-1zM451 745h1v1h-1zM455 745h1v1h-1zM459 745h1v1h-1zM463 745h1v1h-1zM467 745h1v1h-1zM471 745h1v1h-1zM475 745h1v1h-1zM479 745h1v1h-1zM483 745h1v1h-1zM487 745h1v1h-1zM491 745h1v1h-1zM495 745h1v1h-1zM499 745h1v1h-1zM503 745h1v1h-1zM507 745h1v1h-1zM511 745h1v1h-1zM515 745h1v1h-1zM519 745h1v1h-1zM523 745h1v1h-1zM527 745h1v1h-1zM531 745h1v1h-1zM535 745h1v1h-1zM539 745h1v1h-1zM543 745h1v1h-1zM547 745h1v1h-1zM551 745h1v1h-1zM555 745h1v1h-1zM559 745h1v1h-1zM563 745h1v1h-1zM567 745h1v1h-1zM571 745h1v1h-1zM575 745h1v1h-1zM579 745h1v1h-1zM583 745h1v1h-1zM587 745h1v1h-1zM591 745h1v1h-1zM595 745h1v1h-1zM599 745h1v1h-1zM603 745h1v1h-1zM607 745h1v1h-1zM611 745h1v1h-1zM615 745h1v1h-1zM619 745h1v1h-1zM623 745h1v1h-1zM627 745h1v1h-1zM631 745h1v1h-1zM635 745h1v1h-1zM639 745h1v1h-1zM643 745h1v1h-1zM647 745h1v1h-1zM651 745h1v1h-1zM655 745h1v1h-1zM659 745h1v1h-1zM663 745h1v1h-1zM667 745h1v1h-1zM671 745h1v1h-1zM675 745h1v1h-1zM679 745h1v1h-1zM683 745h1v1h-1zM687 745h1v1h-1zM691 745h1v1h-1zM695 745h1v1h-1zM699 745h1v1h-1zM703 745h1v1h-1zM707 745h1v1h-1zM711 745h1v1h-1zM715 745h1v1h-1zM719 745h1v1h-1zM723 745h1v1h-1zM727 745h1v1h-1zM731 745h1v1h-1zM735 745h1v1h-1zM739 745h1v1h-1zM743 745h1v1h-1zM747 745h1v1h-1zM751 745h1v1h-1zM755 745h1v1h-1zM759 745h1v1h-1zM763 745h1v1h-1zM767 745h1v1h-1zM771 745h1v1h-1zM775 745h1v1h-1zM779 745h1v1h-1zM783 745h1v1h-1zM787 745h1v1h-1zM791 745h1v1h-1zM795 745h1v1h-1zM799 745h1v1h-1zM803 745h1v1h-1zM807 745h1v1h-1zM811 745h1v1h-1zM815 745h1v1h-1zM819 745h1v1h-1zM823 745h1v1h-1zM827 745h1v1h-1zM831 745h1v1h-1zM835 745h1v1h-1zM839 745h1v1h-1zM843 745h1v1h-1zM847 745h1v1h-1zM851 745h1v1h-1zM855 745h1v1h-1zM859 745h1v1h-1zM863 745h1v1h-1zM867 745h1v1h-1zM871 745h1v1h-1zM875 745h1v1h-1zM879 745h1v1h-1zM883 745h1v1h-1zM887 745h1v1h-1zM891 745h1v1h-1zM895 745h1v1h-1zM899 745h1v1h-1zM903 745h1v1h-1zM907 745h1v1h-1zM911 745h1v1h-1zM915 745h1v1h-1zM919 745h1v1h-1zM923 745h1v1h-1zM927 745h1v1h-1zM931 745h1v1h-1zM935 745h1v1h-1zM939 745h1v1h-1zM943 745h1v1h-1zM947 745h1v1h-1zM951 745h1v1h-1zM955 745h1v1h-1zM959 745h1v1h-1zM963 745h1v1h-1zM967 745h1v1h-1zM971 745h1v1h-1zM975 745h1v1h-1zM979 745h1v1h-1zM983 745h1v1h-1zM987 745h1v1h-1zM991 745h1v1h-1zM995 745h1v1h-1zM999 745h1v1h-1zM1003 745h1v1h-1zM1007 745h1v1h-1zM1011 745h1v1h-1zM1015 745h1v1h-1zM1019 745h1v1h-1zM1023 745h1v1h-1zM1027 745h1v1h-1zM1031 745h1v1h-1zM1035 745h1v1h-1zM1039 745h1v1h-1zM1043 745h1v1h-1zM1047 745h1v1h-1zM1051 745h1v1h-1zM1055 745h1v1h-1zM1059 745h1v1h-1zM1063 745h1v1h-1z" fill="#800000"/><rect x="1066" y="745" width="4" height="1" fill="#ff0000"/><path d="M39 786h1v1h-1zM43 786h1v1h-1zM47 786h1v1h-1zM51 786h1v1h-1zM55 786h1v1h-1zM59 786h1v1h-1zM63 786h1v1h-1zM67 786h1v1h-1zM71 786h1v1h-1zM75 786h1v1h-1zM79 786h1v1h-1zM83 786h1v1h-1zM87 786h1v1h-1zM91 786h1v1h-1zM95 786h1v1h-1zM99 786h1v1h-1zM103 786h1v1h-1zM107 786h1v1h-1zM111 786h1v1h-1zM115 786h1v1h-1zM119 786h1v1h-1zM123 786h1v1h-1zM127 786h1v1h-1zM131 786h1v1h-1zM135 786h1v1h-1zM139 786h1v1h-1zM143 786h1v1h-1zM147 786h1v1h-1zM151 786h1v1h-1zM155 786h1v1h-1zM159 786h1v1h-1zM163 786h1v1h-1zM167 786h1v1h-1zM171 786h1v1h-1zM175 786h1v1h-1zM179 786h1v1h-1zM183 786h1v1h-1zM187 786h1v1h-1zM191 786h1v1h-1zM195 786h1v1h-1zM199 786h1v1h-1zM203 786h1v1h-1zM207 786h1v1h-1zM211 786h1v1h-1zM215 786h1v1h-1zM219 786h1v1h-1zM223 786h1v1h-1zM227 786h1v1h-1zM231 786h1v1h-1zM235 786h1v1h-1zM239 786h1v1h-1zM243 786h1v1h-1zM247 786h1v1h-1zM251 786h1v1h-1zM255 786h1v1h-1zM259 786h1v1h-1zM263 786h1v1h-1zM267 786h1v1h-1zM271 786h1v1h-1zM275 786h1v1h-1zM279 786h1v1h-1zM283 786h1v1h-1zM287 786h1v1h-1zM291 786h1v1h-1zM295 786h1v1h-1zM299 786h1v1h-1zM303 786h1v1h-1zM307 786h1v1h-1zM311 786h1v1h-1zM315 786h1v1h-1zM319 786h1v1h-1zM323 786h1v1h-1zM327 786h1v1h-1zM331 786h1v1h-1zM335 786h1v1h-1zM339 786h1v1h-1zM343 786h1v1h-1zM347 786h1v1h-1zM351 786h1v1h-1zM355 786h1v1h-1zM359 786h1v1h-1zM363 786h1v1h-1zM367 786h1v1h-1zM371 786h1v1h-1zM375 786h1v1h-1zM379 786h1v1h-1zM383 786h1v1h-1zM387 786h1v1h-1zM391 786h1v1h-1zM395 786h1v1h-1zM399 786h1v1h-1zM403 786h1v1h-1zM407 786h1v1h-1zM411 786h1v1h-1zM415 786h1v1h-1zM419 786h1v1h-1zM423 786h1v1h-1zM427 786h1v1h-1zM431 786h1v1h-1zM435 786h1v1h-1zM439 786h1v1h-1zM443 786h1v1h-1zM447 786h1v1h-1zM451 786h1v1h-1zM455 786h1v1h-1zM459 786h1v1h-1zM463 786h1v1h-1zM467 786h1v1h-1zM471 786h1v1h-1zM475 786h1v1h-1zM479 786h1v1h-1zM483 786h1v1h-1zM487 786h1v1h-1zM491 786h1v1h-1zM495 786h1v1h-1zM499 786h1v1h-1zM503 786h1v1h-1zM507 786h1v1h-1zM511 786h1v1h-1zM515 786h1v1h-1zM519 786h1v1h-1zM523 786h1v1h-1zM527 786h1v1h-1zM531 786h1v1h-1zM535 786h1v1h-1zM539 786h1v1h-1zM543 786h1v1h-1zM547 786h1v1h-1zM551 786h1v1h-1zM555 786h1v1h-1zM559 786h1v1h-1zM563 786h1v1h-1zM567 786h1v1h-1zM571 786h1v1h-1zM575 786h1v1h-1zM579 786h1v1h-1zM583 786h1v1h-1zM587 786h1v1h-1zM591 786h1v1h-1zM595 786h1v1h-1zM599 786h1v1h-1zM603 786h1v1h-1zM607 786h1v1h-1zM611 786h1v1h-1zM615 786h1v1h-1zM619 786h1v1h-1zM623 786h1v1h-1zM627 786h1v1h-1zM631 786h1v1h-1zM635 786h1v1h-1zM639 786h1v1h-1zM643 786h1v1h-1zM647 786h1v1h-1zM651 786h1v1h-1zM655 786h1v1h-1zM659 786h1v1h-1zM663 786h1v1h-1zM667 786h1v1h-1zM671 786h1v1h-1zM675 786h1v1h-1zM679 786h1v1h-1zM683 786h1v1h-1zM687 786h1v1h-1zM691 786h1v1h-1zM695 786h1v1h-1zM699 786h1v1h-1zM703 786h1v1h-1zM707 786h1v1h-1zM711 786h1v1h-1zM715 786h1v1h-1zM719 786h1v1h-1zM723 786h1v1h-1zM727 786h1v1h-1zM731 786h1v1h-1zM735 786h1v1h-1zM739 786h1v1h-1zM743 786h1v1h-1zM747 786h1v1h-1zM751 786h1v1h-1zM755 786h1v1h-1zM759 786h1v1h-1zM763 786h1v1h-1zM767 786h1v1h-1zM771 786h1v1h-1zM775 786h1v1h-1zM779 786h1v1h-1zM783 786h1v1h-1zM787 786h1v1h-1zM791 786h1v1h-1zM795 786h1v1h-1zM799 786h1v1h-1zM803 786h1v1h-1zM807 786h1v1h-1zM811 786h1v1h-1zM815 786h1v1h-1zM819 786h1v1h-1zM823 786h1v1h-1zM827 786h1v1h-1zM831 786h1v1h-1zM835 786h1v1h-1zM839 786h1v1h-1zM843 786h1v1h-1zM847 786h1v1h-1zM851 786h1v1h-1zM855 786h1v1h-1zM859 786h1v1h-1zM863 786h1v1h-1zM867 786h1v1h-1zM871 786h1v1h-1zM875 786h1v1h-1zM879 786h1v1h-1zM883 786h1v1h-1zM887 786h1v1h-1zM891 786h1v1h-1zM895 786h1v1h-1zM899 786h1v1h-1zM903 786h1v1h-1zM907 786h1v1h-1zM911 786h1v1h-1zM915 786h1v1h-1zM919 786h1v1h-1zM923 786h1v1h-1zM927 786h1v1h-1zM931 786h1v1h-1zM935 786h1v1h-1zM939 786h1v1h-1zM943 786h1v1h-1zM947 786h1v1h-1zM951 786h1v1h-1zM955 786h1v1h-1zM959 786h1v1h-1zM963 786h1v1h-1zM967 786h1v1h-1zM971 786h1v1h-1zM975 786h1v1h-1zM979 786h1v1h-1zM983 786h1v1h-1zM987 786h1v1h-1zM991 786h1v1h-1zM995 786h1v1h-1zM999 786h1v1h-1zM1003 786h1v1h-1zM1007 786h1v1h-1zM1011 786h1v1h-1zM1015 786h1v1h-1zM1019 786h1v1h-1zM1023 786h1v1h-1zM1027 786h1v1h-1zM1031 786h1v1h-1zM1035 786h1v1h-1zM1039 786h1v1h-1zM1043 786h1v1h-1zM1047 786h1v1h-1zM1051 786h1v1h-1zM1055 786h1v1h-1zM1059 786h1v1h-1zM1063 786h1v1h-1z" fill="#800000"/><rect x="1066" y="786" width="4" height="1" fill="#ff0000"/><rect x="1066" y="766" width="4" height="1" fill="#ff0000"/><rect x="42" y="766" width="1015" height="1" fill="#ffffff"/><rect x="1056" y="85" width="1" height="288" fill="#ffffff"/><rect x="1056" y="495" width="1" height="11" fill="#ffffff"/><rect x="1056" y="530" width="1" height="81" fill="#ffffff"/><rect x="1056" y="636" width="1" height="80" fill="#ffffff"/><rect x="1056" y="739" width="1" height="52" fill="#ffffff"/><polyline fill="none" stroke="#fff" stroke-width="1" points="42.5,636.5 54.5,636.5 60.5,715.5 79.5,715.5 84.5,636.5 90.5,636.5 98.5,715.5 140.5,715.5 146.5,636.5 158.5,636.5 164.5,715.5 170.5,636.5 176.5,715.5 201.5,715.5 208.5,636.5 220.5,636.5 226.5,715.5 231.5,715.5 238.5,636.5 287.5,636.5 293.5,715.5 311.5,715.5 318.5,636.5 373.5,636.5 379.5,715.5 396.5,715.5 402.5,636.5 408.5,636.5 415.5,715.5 421.5,715.5 427.5,636.5 434.5,715.5 470.5,715.5 476.5,636.5 494.5,636.5 500.5,715.5 543.5,715.5 550.5,636.5 555.5,715.5 568.5,715.5 574.5,636.5 580.5,715.5 592.5,715.5 599.5,636.5 605.5,636.5 611.5,715.5 623.5,715.5 629.5,636.5 648.5,636.5 653.5,715.5 677.5,715.5 684.5,636.5 690.5,715.5 703.5,715.5 708.5,636.5 727.5,636.5 732.5,715.5 775.5,715.5 782.5,636.5 788.5,715.5 812.5,715.5 818.5,636.5 824.5,636.5 830.5,715.5 843.5,715.5 849.5,636.5 904.5,636.5 910.5,715.5 916.5,636.5 923.5,636.5 929.5,715.5 935.5,636.5 941.5,636.5 946.5,715.5 978.5,715.5 984.5,636.5 1056.5,636.5"/><rect x="934" y="325" width="1" height="12" fill="#ff0000"/><rect x="933.5" y="326.5" width="2" height="6" fill="#000" stroke="#ff0000" stroke-width="1"/><rect x="940" y="322" width="1" height="6" fill="#54ffff"/><rect x="939" y="323" width="3" height="4" fill="#54ffff"/><rect x="946" y="323" width="1" height="10" fill="#ff0000"/><rect x="945.5" y="324.5" width="2" height="3" fill="#000" stroke="#ff0000" stroke-width="1"/><rect x="952" y="321" width="1" height="7" fill="#ff0000"/><rect x="951" y="323" width="3" height="3" fill="#ff0000"/><rect x="959" y="322" width="1" height="9" fill="#54ffff"/><rect x="958" y="322" width="3" height="6" fill="#54ffff"/><rect x="965" y="293" width="1" height="30" fill="#ff0000"/><rect x="964.5" y="310.5" width="2" height="13" fill="#000" stroke="#ff0000" stroke-width="1"/><rect x="971" y="314" width="1" height="12" fill="#54ffff"/><rect x="970" y="317" width="3" height="5" fill="#54ffff"/><rect x="977" y="321" width="1" height="12" fill="#54ffff"/><rect x="976" y="321" width="3" height="11" fill="#54ffff"/><rect x="983" y="327" width="1" height="6" fill="#54ffff"/><rect x="982" y="331" width="3" height="2" fill="#54ffff"/><rect x="989" y="315" width="1" height="11" fill="#54ffff"/><rect x="988" y="320" width="3" height="7" fill="#54ffff"/><rect x="995" y="319" width="1" height="11" fill="#54ffff"/><rect x="994" y="323" width="3" height="7" fill="#54ffff"/><rect x="1001" y="333" width="1" height="8" fill="#54ffff"/><rect x="1000" y="333" width="3" height="6" fill="#54ffff"/><rect x="1007" y="333" width="1" height="9" fill="#ff0000"/><rect x="1006" y="334" width="3" height="4" fill="#ff0000"/><rect x="1044" y="293" width="1" height="27" fill="#ff0000"/><rect x="1043.5" y="300.5" width="2" height="10" fill="#000" stroke="#ff0000" stroke-width="1"/><rect x="934" y="459" width="1" height="7" fill="#54ffff"/><rect x="940" y="459" width="1" height="5" fill="#54ffff"/><rect x="946" y="459" width="1" height="3" fill="#54ffff"/><rect x="952" y="459" width="1" height="2" fill="#54ffff"/><rect x="965" y="454" width="1" height="5" fill="#ff0000"/><rect x="971" y="454" width="1" height="5" fill="#ff0000"/><rect x="977" y="456" width="1" height="3" fill="#ff0000"/><rect x="983" y="457" width="1" height="2" fill="#ff0000"/><rect x="989" y="457" width="1" height="2" fill="#ff0000"/><rect x="995" y="457" width="1" height="2" fill="#ff0000"/><rect x="1001" y="459" width="1" height="2" fill="#54ffff"/><rect x="1007" y="459" width="1" height="2" fill="#54ffff"/><polyline fill="none" stroke="#ffffff" stroke-width="1" points="930,471.5 937,471.5 937,470.5 949,470.5 949,469.5 961,469.5 961,468.5 968,468.5 968,466.5 975,466.5 975,467.5 986,467.5 986,468.5 1011,468.5"/><polyline fill="none" stroke="#ffff00" stroke-width="1" points="930,467.5 932,467.5 932,468.5 944,468.5 944,469.5 962,469.5 962,468.5 986,468.5 986,467.5 999,467.5 999,467.5 1011,467.5"/></svg>
<div class="a" style="left:-2px;top:-6px;font-size:13px;color:#000">看(<u>V</u>)</div>
<div class="a" style="left:42px;top:-6px;font-size:13px;color:#000">交易(<u>O</u>)</div>
<div class="a" style="left:100px;top:-6px;font-size:13px;color:#000">分析(<u>A</u>)</div>
<div class="a" style="left:156px;top:-6px;font-size:13px;color:#000">工具(<u>T</u>)</div>
<div class="a" style="left:210px;top:-6px;font-size:13px;color:#000">窗口(<u>W</u>)</div>
<div class="a" style="left:270px;top:-6px;font-size:13px;color:#000">帮助(<u>H</u>)</div>
<div class="a" style="left:1341px;top:9px;width:6px;height:2px;background:#000"></div>
<svg class="a" style="left:1356px;top:3px" width="10" height="10"><path d="M3.5 3V0.5H9V6.5H6.5" fill="none" stroke="#000"/><rect x="3.2" y="0" width="6.3" height="1.8" fill="#000"/><rect x="0.5" y="3.5" width="6" height="6" fill="none" stroke="#000"/><rect x="0" y="3" width="7" height="2" fill="#000"/></svg>
<svg class="a" style="left:1371px;top:3px" width="10" height="9"><path d="M1 1L9 8M9 1L1 8" stroke="#000" stroke-width="1.7"/></svg>
<div class="a" style="left:0;top:16px;width:1384px;height:1px;background:#a0a0a0"></div>
<div class="a" style="left:0;top:17px;width:1384px;height:10px;background:linear-gradient(#f7f7f7,#ebebeb)"></div>
<div class="a" style="left:47px;top:19px;width:34px;height:10px;border:1px solid #2f72b5;border-bottom:none"></div>
<div class="a" style="left:275px;top:19px;width:23px;height:10px;border:1px solid #2f72b5;border-bottom:none"></div>
<div class="a" style="left:621px;top:19px;width:22px;height:10px;border:1px solid #2f72b5;border-bottom:none"></div>
<div class="a" style="left:127px;top:18px;width:1px;height:10px;background:#b0b0b0"></div>
<div class="a" style="left:223px;top:18px;width:1px;height:10px;background:#b0b0b0"></div>
<div class="a" style="left:264px;top:18px;width:1px;height:10px;background:#b0b0b0"></div>
<div class="a" style="left:268px;top:18px;width:1px;height:10px;background:#b0b0b0"></div>
<div class="a" style="left:593px;top:18px;width:1px;height:10px;background:#b0b0b0"></div>
<div class="a" style="left:778px;top:18px;width:1px;height:10px;background:#b0b0b0"></div>
<div class="a" style="left:885px;top:18px;width:1px;height:10px;background:#b0b0b0"></div>
<svg class="a" style="left:0;top:0" width="940" height="30"><path d="M10 27.5 Q14.0 22 18 27.5" fill="none" stroke="#333"/><path d="M30.5 27 V24.5 H37.5 V27" fill="none" stroke="#333"/><path d="M58 27 L60 24 L62 27z" fill="#222"/><rect x="86" y="25" width="6" height="2" fill="#444"/><path d="M106.5 27 V24.5 H119.5 V27" fill="none" stroke="#333"/><path d="M141 27 L143 24 L145 27z" fill="#222"/><path d="M162.5 27 V24.5 H166.5 V27" fill="none" stroke="#333"/><path d="M183 27.5 Q187.0 22 191 27.5" fill="none" stroke="#333"/><path d="M205 27.5 Q209.0 22 213 27.5" fill="none" stroke="#333"/><rect x="234" y="25" width="8" height="2" fill="#444"/><path d="M281 27 L283 24 L285 27z" fill="#222"/><rect x="320" y="25" width="3" height="2" fill="#444"/><rect x="343" y="25" width="3" height="2" fill="#444"/><rect x="348" y="25" width="3" height="2" fill="#444"/><path d="M376.5 27 V24.5 H389.5 V27" fill="none" stroke="#333"/><rect x="416" y="25" width="2" height="2" fill="#444"/><rect x="446" y="25" width="2" height="2" fill="#444"/><rect x="478" y="25" width="2" height="2" fill="#444"/><rect x="483" y="25" width="2" height="2" fill="#444"/><path d="M509.5 27 V24.5 H520.5 V27" fill="none" stroke="#333"/><path d="M543 27.5 Q549.0 22 555 27.5" fill="none" stroke="#333"/><path d="M578 27 L580 24 L582 27z" fill="#222"/><rect x="603" y="25" width="3" height="2" fill="#444"/><rect x="609" y="25" width="3" height="2" fill="#444"/><path d="M628 27.5 Q632.0 22 636 27.5" fill="none" stroke="#333"/><rect x="675" y="25" width="3" height="2" fill="#444"/><path d="M695 27.5 Q698.5 22 702 27.5" fill="none" stroke="#333"/><path d="M720 27 L722 24 L724 27z" fill="#222"/><path d="M746.5 27 V24.5 H757.5 V27" fill="none" stroke="#333"/><rect x="790" y="25" width="10" height="2" fill="#444"/><path d="M812 27.5 Q816.0 22 820 27.5" fill="none" stroke="#333"/><rect x="836" y="25" width="10" height="2" fill="#444"/><rect x="860" y="25" width="8" height="2" fill="#444"/></svg>
<div class="a" style="left:0;top:27px;width:14px;height:723px;background:#c9c9b9"></div>
<div class="a" style="left:0;top:27px;width:3px;height:16px;background:#e4e4e4"></div>
<div class="a" style="left:0;top:43px;width:3px;height:29px;background:#b4b4b4"></div>
<div class="a" style="left:0;top:72px;width:3px;height:28px;background:#d4d4d4"></div>
<div class="a" style="left:14px;top:27px;width:24px;height:773px;background:#f0f0f0"></div>
<div class="a" style="left:15px;top:560px;width:15px;height:155px;background:#cdcdcd"></div>
<div class="a" style="left:33px;top:27px;width:1px;height:743px;background:#b0b0b0"></div>
<div class="a" style="left:0;top:769px;width:34px;height:1px;background:#b0b0b0"></div>
<div class="a" style="left:11px;top:770px;width:1px;height:26px;background:#b0b0b0"></div>
<div class="a" style="left:0;top:796px;width:12px;height:1px;background:#b0b0b0"></div>
<svg class="a" style="left:0;top:730px" width="38" height="40"><path d="M19.5 10.5L22.5 14.5L25.5 10.5M3.5 26.5L7.5 29.5L3.5 32.5" fill="none" stroke="#555" stroke-width="2"/></svg>
<div class="a" style="left:0px;top:780px;font-size:11px;color:#000">...</div>
<div class="a" style="left:12px;top:777px;width:15px;height:15px;border-right:1px solid #888;border-bottom:1px solid #888;background:#f4f4f4"></div>
<div class="a" style="left:16px;top:780px;width:0;height:0;border-left:6px solid #000;border-top:5px solid transparent;border-bottom:5px solid transparent"></div>
<div class="a" style="left:1072px;top:486px;font-family:'Liberation Sans',sans-serif;font-size:12.5px;color:#ff0000;line-height:13px"><span style="display:inline-block;width:7px;text-align:center">0</span><span style="display:inline-block;width:7px;text-align:center">.</span><span style="display:inline-block;width:7px;text-align:center">0</span><span style="display:inline-block;width:7px;text-align:center">0</span><span style="display:inline-block;width:7px;text-align:center">0</span></div>
<div class="a" style="left:1072px;top:93px;font-family:'Liberation Sans',sans-serif;font-size:12.5px;color:#ff0000;line-height:13px"><span style="display:inline-block;width:7px;text-align:center">1</span><span style="display:inline-block;width:7px;text-align:center">8</span><span style="display:inline-block;width:7px;text-align:center">.</span><span style="display:inline-block;width:7px;text-align:center">0</span><span style="display:inline-block;width:7px;text-align:center">0</span></div>
<div class="a" style="left:1072px;top:183px;font-family:'Liberation Sans',sans-serif;font-size:12.5px;color:#ff0000;line-height:13px"><span style="display:inline-block;width:7px;text-align:center">1</span><span style="display:inline-block;width:7px;text-align:center">6</span><span style="display:inline-block;width:7px;text-align:center">.</span><span style="display:inline-block;width:7px;text-align:center">0</span><span style="display:inline-block;width:7px;text-align:center">0</span></div>
<div class="a" style="left:1072px;top:272px;font-family:'Liberation Sans',sans-serif;font-size:12.5px;color:#ff0000;line-height:13px"><span style="display:inline-block;width:7px;text-align:center">1</span><span style="display:inline-block;width:7px;text-align:center">4</span><span style="display:inline-block;width:7px;text-align:center">.</span><span style="display:inline-block;width:7px;text-align:center">0</span><span style="display:inline-block;width:7px;text-align:center">0</span></div>
<div class="a" style="left:1079px;top:525px;font-family:'Liberation Sans',sans-serif;font-size:12.5px;color:#ff0000;line-height:13px"><span style="display:inline-block;width:7px;text-align:center">1</span><span style="display:inline-block;width:7px;text-align:center">.</span><span style="display:inline-block;width:7px;text-align:center">0</span><span style="display:inline-block;width:7px;text-align:center">0</span></div>
<div class="a" style="left:1079px;top:545px;font-family:'Liberation Sans',sans-serif;font-size:12.5px;color:#ff0000;line-height:13px"><span style="display:inline-block;width:7px;text-align:center">0</span><span style="display:inline-block;width:7px;text-align:center">.</span><span style="display:inline-block;width:7px;text-align:center">5</span><span style="display:inline-block;width:7px;text-align:center">0</span></div>
<div class="a" style="left:1079px;top:565px;font-family:'Liberation Sans',sans-serif;font-size:12.5px;color:#ff0000;line-height:13px"><span style="display:inline-block;width:7px;text-align:center">0</span><span style="display:inline-block;width:7px;text-align:center">.</span><span style="display:inline-block;width:7px;text-align:center">0</span><span style="display:inline-block;width:7px;text-align:center">0</span></div>
<div class="a" style="left:1072px;top:585px;font-family:'Liberation Sans',sans-serif;font-size:12.5px;color:#ff0000;line-height:13px"><span style="display:inline-block;width:7px;text-align:center">&minus;</span><span style="display:inline-block;width:7px;text-align:center">0</span><span style="display:inline-block;width:7px;text-align:center">.</span><span style="display:inline-block;width:7px;text-align:center">5</span><span style="display:inline-block;width:7px;text-align:center">0</span></div>
<div class="a" style="left:1072px;top:605px;font-family:'Liberation Sans',sans-serif;font-size:12.5px;color:#ff0000;line-height:13px"><span style="display:inline-block;width:7px;text-align:center">&minus;</span><span style="display:inline-block;width:7px;text-align:center">1</span><span style="display:inline-block;width:7px;text-align:center">.</span><span style="display:inline-block;width:7px;text-align:center">0</span><span style="display:inline-block;width:7px;text-align:center">0</span></div>
<div class="a" style="left:1079px;top:631px;font-family:'Liberation Sans',sans-serif;font-size:12.5px;color:#ff0000;line-height:13px"><span style="display:inline-block;width:7px;text-align:center">1</span><span style="display:inline-block;width:7px;text-align:center">.</span><span style="display:inline-block;width:7px;text-align:center">0</span><span style="display:inline-block;width:7px;text-align:center">0</span></div>
<div class="a" style="left:1079px;top:670px;font-family:'Liberation Sans',sans-serif;font-size:12.5px;color:#ff0000;line-height:13px"><span style="display:inline-block;width:7px;text-align:center">0</span><span style="display:inline-block;width:7px;text-align:center">.</span><span style="display:inline-block;width:7px;text-align:center">5</span><span style="display:inline-block;width:7px;text-align:center">0</span></div>
<div class="a" style="left:1079px;top:710px;font-family:'Liberation Sans',sans-serif;font-size:12.5px;color:#ff0000;line-height:13px"><span style="display:inline-block;width:7px;text-align:center">0</span><span style="display:inline-block;width:7px;text-align:center">.</span><span style="display:inline-block;width:7px;text-align:center">0</span><span style="display:inline-block;width:7px;text-align:center">0</span></div>
<div class="a" style="left:1079px;top:740px;font-family:'Liberation Sans',sans-serif;font-size:12.5px;color:#ff0000;line-height:13px"><span style="display:inline-block;width:7px;text-align:center">2</span><span style="display:inline-block;width:7px;text-align:center">.</span><span style="display:inline-block;width:7px;text-align:center">0</span><span style="display:inline-block;width:7px;text-align:center">0</span></div>
<div class="a" style="left:1079px;top:761px;font-family:'Liberation Sans',sans-serif;font-size:12.5px;color:#ff0000;line-height:13px"><span style="display:inline-block;width:7px;text-align:center">1</span><span style="display:inline-block;width:7px;text-align:center">.</span><span style="display:inline-block;width:7px;text-align:center">0</span><span style="display:inline-block;width:7px;text-align:center">0</span></div>
<div class="a" style="left:1079px;top:781px;font-family:'Liberation Sans',sans-serif;font-size:12.5px;color:#ff0000;line-height:13px"><span style="display:inline-block;width:7px;text-align:center">0</span><span style="display:inline-block;width:7px;text-align:center">.</span><span style="display:inline-block;width:7px;text-align:center">0</span><span style="display:inline-block;width:7px;text-align:center">0</span></div>
<div class="a" style="left:990px;top:377px;font-family:'Liberation Sans',sans-serif;font-size:12.5px;color:#ff0000;line-height:13px"><span style="display:inline-block;width:7px;text-align:center">0</span><span style="display:inline-block;width:7px;text-align:center">4</span></div>
<div class="a" style="left:962px;top:47px;width:32px;height:14px;border:1px solid #ff0000;background:#3a3a3a;border-radius:2px"></div>
<div class="a" style="left:967px;top:47px;font-size:11px;color:#d8d8d8;line-height:14px">时段</div>
<div class="a" style="left:999px;top:47px;width:43px;height:14px;border:1px solid #ff0000;background:#3a3a3a;border-radius:2px"></div>
<div class="a" style="left:1003px;top:47px;font-size:11px;color:#d8d8d8;line-height:14px">补数据</div>
<div class="a" style="left:1047px;top:47px;width:16px;height:14px;border:1px solid #fff"></div>
<svg class="a" style="left:1047px;top:47px" width="16" height="14"><path d="M8 1L15 7L8 13L1 7Z" fill="#00ff00" stroke="#ffff00"/><path d="M8 4v7M7 5h2" stroke="#a05000"/></svg>
<svg class="a" style="left:1066px;top:48px" width="12" height="12"><path d="M6 1v9M3 3h6M2 7q4 5 8 0" fill="none" stroke="#ff0000" stroke-width="2"/></svg>
<div class="a" style="left:1094px;top:48px;width:11px;height:12px;border:1px solid #ff0000"></div>
<div class="a" style="left:1101px;top:48px;width:1px;height:12px;background:#ff0000"></div>
<svg class="a" style="left:0;top:0" width="1384" height="810" shape-rendering="crispEdges"><rect x="1108" y="73" width="252" height="1" fill="#ff0000"/><rect x="1108" y="96" width="252" height="1" fill="#ff0000"/><rect x="1108" y="202" width="252" height="1" fill="#ff0000"/><rect x="1143" y="96" width="1" height="206" fill="#ff0000"/><rect x="1108" y="520" width="252" height="1" fill="#ff0000"/><rect x="1109" y="541" width="1" height="1" fill="#ff0000"/><rect x="1109" y="731" width="1" height="1" fill="#ff0000"/><rect x="1113" y="541" width="1" height="1" fill="#ff0000"/><rect x="1113" y="731" width="1" height="1" fill="#ff0000"/><rect x="1117" y="541" width="1" height="1" fill="#ff0000"/><rect x="1117" y="731" width="1" height="1" fill="#ff0000"/><rect x="1121" y="541" width="1" height="1" fill="#ff0000"/><rect x="1121" y="731" width="1" height="1" fill="#ff0000"/><rect x="1125" y="541" width="1" height="1" fill="#ff0000"/><rect x="1125" y="731" width="1" height="1" fill="#ff0000"/><rect x="1129" y="541" width="1" height="1" fill="#ff0000"/><rect x="1129" y="731" width="1" height="1" fill="#ff0000"/><rect x="1133" y="541" width="1" height="1" fill="#ff0000"/><rect x="1133" y="731" width="1" height="1" fill="#ff0000"/><rect x="1137" y="541" width="1" height="1" fill="#ff0000"/><rect x="1137" y="731" width="1" height="1" fill="#ff0000"/><rect x="1141" y="541" width="1" height="1" fill="#ff0000"/><rect x="1141" y="731" width="1" height="1" fill="#ff0000"/><rect x="1145" y="541" width="1" height="1" fill="#ff0000"/><rect x="1145" y="731" width="1" height="1" fill="#ff0000"/><rect x="1149" y="541" width="1" height="1" fill="#ff0000"/><rect x="1149" y="731" width="1" height="1" fill="#ff0000"/><rect x="1153" y="541" width="1" height="1" fill="#ff0000"/><rect x="1153" y="731" width="1" height="1" fill="#ff0000"/><rect x="1157" y="541" width="1" height="1" fill="#ff0000"/><rect x="1157" y="731" width="1" height="1" fill="#ff0000"/><rect x="1161" y="541" width="1" height="1" fill="#ff0000"/><rect x="1161" y="731" width="1" height="1" fill="#ff0000"/><rect x="1165" y="541" width="1" height="1" fill="#ff0000"/><rect x="1165" y="731" width="1" height="1" fill="#ff0000"/><rect x="1169" y="541" width="1" height="1" fill="#ff0000"/><rect x="1169" y="731" width="1" height="1" fill="#ff0000"/><rect x="1173" y="541" width="1" height="1" fill="#ff0000"/><rect x="1173" y="731" width="1" height="1" fill="#ff0000"/><rect x="1177" y="541" width="1" height="1" fill="#ff0000"/><rect x="1177" y="731" width="1" height="1" fill="#ff0000"/><rect x="1181" y="541" width="1" height="1" fill="#ff0000"/><rect x="1181" y="731" width="1" height="1" fill="#ff0000"/><rect x="1185" y="541" width="1" height="1" fill="#ff0000"/><rect x="1185" y="731" width="1" height="1" fill="#ff0000"/><rect x="1189" y="541" width="1" height="1" fill="#ff0000"/><rect x="1189" y="731" width="1" height="1" fill="#ff0000"/><rect x="1193" y="541" width="1" height="1" fill="#ff0000"/><rect x="1193" y="731" width="1" height="1" fill="#ff0000"/><rect x="1197" y="541" width="1" height="1" fill="#ff0000"/><rect x="1197" y="731" width="1" height="1" fill="#ff0000"/><rect x="1201" y="541" width="1" height="1" fill="#ff0000"/><rect x="1201" y="731" width="1" height="1" fill="#ff0000"/><rect x="1205" y="541" width="1" height="1" fill="#ff0000"/><rect x="1205" y="731" width="1" height="1" fill="#ff0000"/><rect x="1209" y="541" width="1" height="1" fill="#ff0000"/><rect x="1209" y="731" width="1" height="1" fill="#ff0000"/><rect x="1213" y="541" width="1" height="1" fill="#ff0000"/><rect x="1213" y="731" width="1" height="1" fill="#ff0000"/><rect x="1217" y="541" width="1" height="1" fill="#ff0000"/><rect x="1217" y="731" width="1" height="1" fill="#ff0000"/><rect x="1221" y="541" width="1" height="1" fill="#ff0000"/><rect x="1221" y="731" width="1" height="1" fill="#ff0000"/><rect x="1225" y="541" width="1" height="1" fill="#ff0000"/><rect x="1225" y="731" width="1" height="1" fill="#ff0000"/><rect x="1229" y="541" width="1" height="1" fill="#ff0000"/><rect x="1229" y="731" width="1" height="1" fill="#ff0000"/><rect x="1233" y="541" width="1" height="1" fill="#ff0000"/><rect x="1233" y="731" width="1" height="1" fill="#ff0000"/><rect x="1237" y="541" width="1" height="1" fill="#ff0000"/><rect x="1237" y="731" width="1" height="1" fill="#ff0000"/><rect x="1241" y="541" width="1" height="1" fill="#ff0000"/><rect x="1241" y="731" width="1" height="1" fill="#ff0000"/><rect x="1245" y="541" width="1" height="1" fill="#ff0000"/><rect x="1245" y="731" width="1" height="1" fill="#ff0000"/><rect x="1249" y="541" width="1" height="1" fill="#ff0000"/><rect x="1249" y="731" width="1" height="1" fill="#ff0000"/><rect x="1253" y="541" width="1" height="1" fill="#ff0000"/><rect x="1253" y="731" width="1" height="1" fill="#ff0000"/><rect x="1257" y="541" width="1" height="1" fill="#ff0000"/><rect x="1257" y="731" width="1" height="1" fill="#ff0000"/><rect x="1261" y="541" width="1" height="1" fill="#ff0000"/><rect x="1261" y="731" width="1" height="1" fill="#ff0000"/><rect x="1265" y="541" width="1" height="1" fill="#ff0000"/><rect x="1265" y="731" width="1" height="1" fill="#ff0000"/><rect x="1269" y="541" width="1" height="1" fill="#ff0000"/><rect x="1269" y="731" width="1" height="1" fill="#ff0000"/><rect x="1273" y="541" width="1" height="1" fill="#ff0000"/><rect x="1273" y="731" width="1" height="1" fill="#ff0000"/><rect x="1277" y="541" width="1" height="1" fill="#ff0000"/><rect x="1277" y="731" width="1" height="1" fill="#ff0000"/><rect x="1281" y="541" width="1" height="1" fill="#ff0000"/><rect x="1281" y="731" width="1" height="1" fill="#ff0000"/><rect x="1285" y="541" width="1" height="1" fill="#ff0000"/><rect x="1285" y="731" width="1" height="1" fill="#ff0000"/><rect x="1289" y="541" width="1" height="1" fill="#ff0000"/><rect x="1289" y="731" width="1" height="1" fill="#ff0000"/><rect x="1293" y="541" width="1" height="1" fill="#ff0000"/><rect x="1293" y="731" width="1" height="1" fill="#ff0000"/><rect x="1297" y="541" width="1" height="1" fill="#ff0000"/><rect x="1297" y="731" width="1" height="1" fill="#ff0000"/><rect x="1301" y="541" width="1" height="1" fill="#ff0000"/><rect x="1301" y="731" width="1" height="1" fill="#ff0000"/><rect x="1305" y="541" width="1" height="1" fill="#ff0000"/><rect x="1305" y="731" width="1" height="1" fill="#ff0000"/><rect x="1309" y="541" width="1" height="1" fill="#ff0000"/><rect x="1309" y="731" width="1" height="1" fill="#ff0000"/><rect x="1313" y="541" width="1" height="1" fill="#ff0000"/><rect x="1313" y="731" width="1" height="1" fill="#ff0000"/><rect x="1317" y="541" width="1" height="1" fill="#ff0000"/><rect x="1317" y="731" width="1" height="1" fill="#ff0000"/><rect x="1321" y="541" width="1" height="1" fill="#ff0000"/><rect x="1321" y="731" width="1" height="1" fill="#ff0000"/><rect x="1325" y="541" width="1" height="1" fill="#ff0000"/><rect x="1325" y="731" width="1" height="1" fill="#ff0000"/><rect x="1329" y="541" width="1" height="1" fill="#ff0000"/><rect x="1329" y="731" width="1" height="1" fill="#ff0000"/><rect x="1333" y="541" width="1" height="1" fill="#ff0000"/><rect x="1333" y="731" width="1" height="1" fill="#ff0000"/><rect x="1337" y="541" width="1" height="1" fill="#ff0000"/><rect x="1337" y="731" width="1" height="1" fill="#ff0000"/><rect x="1341" y="541" width="1" height="1" fill="#ff0000"/><rect x="1341" y="731" width="1" height="1" fill="#ff0000"/><rect x="1343.5" y="521.5" width="15" height="260" fill="none" stroke="#ff0000"/><rect x="1343.5" y="521.5" width="15" height="15" fill="none" stroke="#ff0000"/><path d="M1346 532h9l-4.5-6z" fill="#ff0000"/><rect x="1343.5" y="765.5" width="15" height="16" fill="none" stroke="#ff0000"/><path d="M1346 771h9l-4.5 6z" fill="#ff0000"/><rect x="1344.5" y="735.5" width="12" height="29" rx="5" fill="none" stroke="#ff0000"/><path d="M1347 745h7M1347 748h7M1347 751h7M1347 754h7" stroke="#ff0000"/><rect x="1111.5" y="781.5" width="15" height="14" fill="none" stroke="#ff0000"/><rect x="1126.5" y="781.5" width="14" height="14" fill="none" stroke="#ff0000"/><path d="M1122 784v10l-6-5z M1131 784v10l6-5z" fill="#ff0000"/><path d="M1143.5 788.5 L1146.5 795.5 L1165.5 795.5 L1170.5 781.5 L1352.5 781.5 L1347.5 795.5 M1169.5 781.5 L1174.5 795.5 M1193.5 781.5 L1198.5 795.5 M1219.5 781.5 L1224.5 795.5 M1245.5 781.5 L1250.5 795.5 M1270.5 781.5 L1275.5 795.5 M1296.5 781.5 L1301.5 795.5 M1323.5 781.5 L1328.5 795.5 M1174.5 795.5 L1189.5 795.5 L1194.5 787.5 M1198.5 795.5 L1215.5 795.5 L1220.5 787.5 M1224.5 795.5 L1241.5 795.5 L1246.5 787.5 M1250.5 795.5 L1266.5 795.5 L1271.5 787.5 M1275.5 795.5 L1292.5 795.5 L1297.5 787.5 M1301.5 795.5 L1319.5 795.5 L1324.5 787.5 M1328.5 795.5 L1345.5 795.5 L1350.5 787.5 " fill="none" stroke="#ff0000"/></svg>
<div class="a" style="left:1147px;top:782px;font-size:13px;color:#e0e0e0;line-height:16px">细</div>
<div class="a" style="left:1174px;top:782px;font-size:13px;color:#e0e0e0;line-height:16px">势</div>
<div class="a" style="left:1200px;top:782px;font-size:13px;color:#e0e0e0;line-height:16px">盘</div>
<div class="a" style="left:1225px;top:782px;font-size:13px;color:#e0e0e0;line-height:16px">价</div>
<div class="a" style="left:1252px;top:782px;font-size:13px;color:#e0e0e0;line-height:16px">逆</div>
<div class="a" style="left:1278px;top:782px;font-size:13px;color:#e0e0e0;line-height:16px">成</div>
<div class="a" style="left:1304px;top:782px;font-size:13px;color:#e0e0e0;line-height:16px">龙</div>
<div class="a" style="left:1330px;top:782px;font-size:13px;color:#e0e0e0;line-height:16px">财</div>
<div class="a" style="left:1147px;top:50px;font-family:'Liberation Sans',sans-serif;font-weight:bold;font-size:14px;color:#ffff00;line-height:16px;letter-spacing:0.5px">300483</div>
<div class="a" style="left:1203px;top:50px;font-size:16px;color:#ffff00;line-height:18px">首华燃气</div>
<div class="a" style="left:1305px;top:50px;width:13px;height:13px;background:#ffff00;color:#0000c0;font-size:11px;line-height:13px;text-align:center">下</div>
<div class="a" style="left:1322px;top:50px;width:14px;height:13px;background:#00c000"></div>
<svg class="a" style="left:1322px;top:50px" width="14" height="13"><path d="M9 1L4 7h4L5 12L10 6H6z" fill="none" stroke="#ff0000"/></svg>
<div class="a" style="left:1340px;top:50px;width:13px;height:13px;background:#0000e0"></div>
<svg class="a" style="left:1340px;top:50px" width="13" height="13"><path d="M6.5 1L11 6H2z M6.5 7L11 12H2z" fill="#ffff00"/></svg>
<div class="a" style="left:1110px;top:75px;font-size:16px;line-height:18px;color:#c0c0c0">委比</div>
<div class="a" style="left:1172px;top:76px;font-family:'Liberation Sans',sans-serif;font-weight:normal;-webkit-text-stroke:0.45px currentColor;font-size:14px;line-height:16px;color:#00ff00">-13.19%</div>
<div class="a" style="left:1233px;top:75px;font-size:16px;line-height:18px;color:#c0c0c0">委差</div>
<div class="a" style="left:1358px;top:76px;font-family:'Liberation Sans',sans-serif;font-weight:normal;-webkit-text-stroke:0.45px currentColor;font-size:14px;line-height:16px;color:#00ff00;transform:translateX(-100%)">-86</div>
<div class="a" style="left:1123px;top:99px;font-family:'Liberation Sans',sans-serif;font-weight:normal;-webkit-text-stroke:0.45px currentColor;font-size:14px;line-height:16px;color:#e0e0e0">5</div>
<div class="a" style="left:1188px;top:99px;font-family:'Liberation Sans',sans-serif;font-weight:normal;-webkit-text-stroke:0.45px currentColor;font-size:14px;line-height:16px;color:#ff0000">13.31</div>
<div class="a" style="left:1307px;top:99px;font-family:'Liberation Sans',sans-serif;font-weight:normal;-webkit-text-stroke:0.45px currentColor;font-size:14px;line-height:16px;color:#00ff00;transform:translateX(-100%)">154</div>
<div class="a" style="left:1357px;top:99px;font-family:'Liberation Sans',sans-serif;font-size:14px;line-height:16px;color:#ff0000;transform:translateX(-100%)">+2</div>
<div class="a" style="left:1123px;top:119px;font-family:'Liberation Sans',sans-serif;font-weight:normal;-webkit-text-stroke:0.45px currentColor;font-size:14px;line-height:16px;color:#e0e0e0">4</div>
<div class="a" style="left:1188px;top:119px;font-family:'Liberation Sans',sans-serif;font-weight:normal;-webkit-text-stroke:0.45px currentColor;font-size:14px;line-height:16px;color:#ff0000">13.30</div>
<div class="a" style="left:1307px;top:119px;font-family:'Liberation Sans',sans-serif;font-weight:normal;-webkit-text-stroke:0.45px currentColor;font-size:14px;line-height:16px;color:#00ff00;transform:translateX(-100%)">25</div>
<div class="a" style="left:1123px;top:139px;font-family:'Liberation Sans',sans-serif;font-weight:normal;-webkit-text-stroke:0.45px currentColor;font-size:14px;line-height:16px;color:#e0e0e0">3</div>
<div class="a" style="left:1188px;top:139px;font-family:'Liberation Sans',sans-serif;font-weight:normal;-webkit-text-stroke:0.45px currentColor;font-size:14px;line-height:16px;color:#ff0000">13.29</div>
<div class="a" style="left:1307px;top:139px;font-family:'Liberation Sans',sans-serif;font-weight:normal;-webkit-text-stroke:0.45px currentColor;font-size:14px;line-height:16px;color:#00ff00;transform:translateX(-100%)">152</div>
<div class="a" style="left:1357px;top:139px;font-family:'Liberation Sans',sans-serif;font-size:14px;line-height:16px;color:#00ff00;transform:translateX(-100%)">&minus;21</div>
<div class="a" style="left:1123px;top:159px;font-family:'Liberation Sans',sans-serif;font-weight:normal;-webkit-text-stroke:0.45px currentColor;font-size:14px;line-height:16px;color:#e0e0e0">2</div>
<div class="a" style="left:1188px;top:159px;font-family:'Liberation Sans',sans-serif;font-weight:normal;-webkit-text-stroke:0.45px currentColor;font-size:14px;line-height:16px;color:#ff0000">13.28</div>
<div class="a" style="left:1307px;top:159px;font-family:'Liberation Sans',sans-serif;font-weight:normal;-webkit-text-stroke:0.45px currentColor;font-size:14px;line-height:16px;color:#00ff00;transform:translateX(-100%)">36</div>
<div class="a" style="left:1357px;top:159px;font-family:'Liberation Sans',sans-serif;font-size:14px;line-height:16px;color:#00ff00;transform:translateX(-100%)">&minus;8</div>
<div class="a" style="left:1123px;top:228px;font-family:'Liberation Sans',sans-serif;font-weight:normal;-webkit-text-stroke:0.45px currentColor;font-size:14px;line-height:16px;color:#e0e0e0">2</div>
<div class="a" style="left:1188px;top:228px;font-family:'Liberation Sans',sans-serif;font-weight:normal;-webkit-text-stroke:0.45px currentColor;font-size:14px;line-height:16px;color:#ff0000">13.25</div>
<div class="a" style="left:1307px;top:228px;font-family:'Liberation Sans',sans-serif;font-weight:normal;-webkit-text-stroke:0.45px currentColor;font-size:14px;line-height:16px;color:#ff0000;transform:translateX(-100%)">1</div>
<div class="a" style="left:1357px;top:228px;font-family:'Liberation Sans',sans-serif;font-size:14px;line-height:16px;color:#00ff00;transform:translateX(-100%)">&minus;2</div>
<div class="a" style="left:1123px;top:248px;font-family:'Liberation Sans',sans-serif;font-weight:normal;-webkit-text-stroke:0.45px currentColor;font-size:14px;line-height:16px;color:#e0e0e0">3</div>
<div class="a" style="left:1188px;top:248px;font-family:'Liberation Sans',sans-serif;font-weight:normal;-webkit-text-stroke:0.45px currentColor;font-size:14px;line-height:16px;color:#ff0000">13.24</div>
<div class="a" style="left:1307px;top:248px;font-family:'Liberation Sans',sans-serif;font-weight:normal;-webkit-text-stroke:0.45px currentColor;font-size:14px;line-height:16px;color:#ff0000;transform:translateX(-100%)">215</div>
<div class="a" style="left:1357px;top:248px;font-family:'Liberation Sans',sans-serif;font-size:14px;line-height:16px;color:#00ff00;transform:translateX(-100%)">&minus;1</div>
<div class="a" style="left:1123px;top:268px;font-family:'Liberation Sans',sans-serif;font-weight:normal;-webkit-text-stroke:0.45px currentColor;font-size:14px;line-height:16px;color:#e0e0e0">4</div>
<div class="a" style="left:1188px;top:268px;font-family:'Liberation Sans',sans-serif;font-weight:normal;-webkit-text-stroke:0.45px currentColor;font-size:14px;line-height:16px;color:#ff0000">13.23</div>
<div class="a" style="left:1307px;top:268px;font-family:'Liberation Sans',sans-serif;font-weight:normal;-webkit-text-stroke:0.45px currentColor;font-size:14px;line-height:16px;color:#ff0000;transform:translateX(-100%)">43</div>
<div class="a" style="left:1357px;top:268px;font-family:'Liberation Sans',sans-serif;font-size:14px;line-height:16px;color:#00ff00;transform:translateX(-100%)">&minus;20</div>
<div class="a" style="left:1123px;top:288px;font-family:'Liberation Sans',sans-serif;font-weight:normal;-webkit-text-stroke:0.45px currentColor;font-size:14px;line-height:16px;color:#e0e0e0">5</div>
<div class="a" style="left:1188px;top:288px;font-family:'Liberation Sans',sans-serif;font-weight:normal;-webkit-text-stroke:0.45px currentColor;font-size:14px;line-height:16px;color:#ff0000">13.22</div>
<div class="a" style="left:1307px;top:288px;font-family:'Liberation Sans',sans-serif;font-weight:normal;-webkit-text-stroke:0.45px currentColor;font-size:14px;line-height:16px;color:#ff0000;transform:translateX(-100%)">10</div>
<div class="a" style="left:1357px;top:288px;font-family:'Liberation Sans',sans-serif;font-size:14px;line-height:16px;color:#00ff00;transform:translateX(-100%)">&minus;135</div>
<div class="a" style="left:1118px;top:180px;font-size:16px;color:#00ff00;line-height:18px">卖</div>
<div class="a" style="left:1183px;top:180px;font-family:'Liberation Sans',sans-serif;font-weight:bold;font-size:18px;line-height:20px;color:#ff0000">13.27</div>
<div class="a" style="left:1307px;top:180px;font-family:'Liberation Sans',sans-serif;font-weight:bold;font-size:18px;line-height:20px;color:#00ff00;transform:translateX(-100%)">2</div>
<div class="a" style="left:1357px;top:181px;font-family:'Liberation Sans',sans-serif;font-size:14px;line-height:16px;color:#ff0000;transform:translateX(-100%)">+1</div>
<div class="a" style="left:1118px;top:207px;font-size:16px;color:#ff0000;line-height:18px">买</div>
<div class="a" style="left:1183px;top:207px;font-family:'Liberation Sans',sans-serif;font-weight:bold;font-size:18px;line-height:20px;color:#ff0000">13.26</div>
<div class="a" style="left:1307px;top:207px;font-family:'Liberation Sans',sans-serif;font-weight:bold;font-size:18px;line-height:20px;color:#ff0000;transform:translateX(-100%)">14</div>
<div class="a" style="left:1357px;top:207px;font-family:'Liberation Sans',sans-serif;font-size:14px;line-height:16px;color:#00ff00;transform:translateX(-100%)">&minus;7</div>
<div class="a" style="left:1111px;top:493px;font-size:16px;line-height:18px;color:#c0c0c0">外盘</div>
<div class="a" style="left:1222px;top:494px;font-family:'Liberation Sans',sans-serif;font-weight:normal;-webkit-text-stroke:0.45px currentColor;font-size:14px;line-height:16px;color:#ff0000;transform:translateX(-100%)">9861</div>
<div class="a" style="left:1234px;top:493px;font-size:16px;line-height:18px;color:#c0c0c0">内盘</div>
<div class="a" style="left:1356px;top:494px;font-family:'Liberation Sans',sans-serif;font-weight:normal;-webkit-text-stroke:0.45px currentColor;font-size:14px;line-height:16px;color:#00ff00;transform:translateX(-100%)">9282</div>
<div class="a" style="left:1144px;top:522px;font-family:'Liberation Sans',sans-serif;font-weight:normal;-webkit-text-stroke:0.45px currentColor;font-size:14px;line-height:16px;color:#e0e0e0;transform:translateX(-100%)">11:27</div>
<div class="a" style="left:1187px;top:522px;font-family:'Liberation Sans',sans-serif;font-weight:normal;-webkit-text-stroke:0.45px currentColor;font-size:14px;line-height:16px;color:#ff0000">13.26</div>
<div class="a" style="left:1291px;top:522px;font-family:'Liberation Sans',sans-serif;font-weight:normal;-webkit-text-stroke:0.45px currentColor;font-size:14px;line-height:16px;color:#ff0000;transform:translateX(-100%)">1</div>
<div class="a" style="left:1144px;top:541px;font-family:'Liberation Sans',sans-serif;font-weight:normal;-webkit-text-stroke:0.45px currentColor;font-size:14px;line-height:16px;color:#e0e0e0;transform:translateX(-100%)">11:28</div>
<div class="a" style="left:1187px;top:541px;font-family:'Liberation Sans',sans-serif;font-weight:normal;-webkit-text-stroke:0.45px currentColor;font-size:14px;line-height:16px;color:#ff0000">13.26</div>
<div class="a" style="left:1291px;top:541px;font-family:'Liberation Sans',sans-serif;font-weight:normal;-webkit-text-stroke:0.45px currentColor;font-size:14px;line-height:16px;color:#ff0000;transform:translateX(-100%)">2</div>
<div class="a" style="left:1144px;top:560px;font-family:'Liberation Sans',sans-serif;font-weight:normal;-webkit-text-stroke:0.45px currentColor;font-size:14px;line-height:16px;color:#e0e0e0;transform:translateX(-100%)">:19</div>
<div class="a" style="left:1187px;top:560px;font-family:'Liberation Sans',sans-serif;font-weight:normal;-webkit-text-stroke:0.45px currentColor;font-size:14px;line-height:16px;color:#ff0000">13.26</div>
<div class="a" style="left:1291px;top:560px;font-family:'Liberation Sans',sans-serif;font-weight:normal;-webkit-text-stroke:0.45px currentColor;font-size:14px;line-height:16px;color:#ff0000;transform:translateX(-100%)">30</div>
<div class="a" style="left:1144px;top:579px;font-family:'Liberation Sans',sans-serif;font-weight:normal;-webkit-text-stroke:0.45px currentColor;font-size:14px;line-height:16px;color:#e0e0e0;transform:translateX(-100%)">:25</div>
<div class="a" style="left:1187px;top:579px;font-family:'Liberation Sans',sans-serif;font-weight:normal;-webkit-text-stroke:0.45px currentColor;font-size:14px;line-height:16px;color:#ff0000">13.26</div>
<div class="a" style="left:1291px;top:579px;font-family:'Liberation Sans',sans-serif;font-weight:normal;-webkit-text-stroke:0.45px currentColor;font-size:14px;line-height:16px;color:#00ff00;transform:translateX(-100%)">1</div>
<svg class="a" style="left:1227px;top:584px" width="6" height="9"><path d="M3 1v6M1.5 5.5l1.5 1.8L4.5 5.5" fill="none" stroke="#00a000" stroke-width="1.1"/></svg>
<div class="a" style="left:1144px;top:598px;font-family:'Liberation Sans',sans-serif;font-weight:normal;-webkit-text-stroke:0.45px currentColor;font-size:14px;line-height:16px;color:#e0e0e0;transform:translateX(-100%)">:28</div>
<div class="a" style="left:1187px;top:598px;font-family:'Liberation Sans',sans-serif;font-weight:normal;-webkit-text-stroke:0.45px currentColor;font-size:14px;line-height:16px;color:#ff0000">13.26</div>
<div class="a" style="left:1291px;top:598px;font-family:'Liberation Sans',sans-serif;font-weight:normal;-webkit-text-stroke:0.45px currentColor;font-size:14px;line-height:16px;color:#00ff00;transform:translateX(-100%)">1</div>
<div class="a" style="left:1144px;top:617px;font-family:'Liberation Sans',sans-serif;font-weight:normal;-webkit-text-stroke:0.45px currentColor;font-size:14px;line-height:16px;color:#e0e0e0;transform:translateX(-100%)">:31</div>
<div class="a" style="left:1187px;top:617px;font-family:'Liberation Sans',sans-serif;font-weight:normal;-webkit-text-stroke:0.45px currentColor;font-size:14px;line-height:16px;color:#ff0000">13.26</div>
<div class="a" style="left:1291px;top:617px;font-family:'Liberation Sans',sans-serif;font-weight:normal;-webkit-text-stroke:0.45px currentColor;font-size:14px;line-height:16px;color:#00ff00;transform:translateX(-100%)">1</div>
<div class="a" style="left:1144px;top:636px;font-family:'Liberation Sans',sans-serif;font-weight:normal;-webkit-text-stroke:0.45px currentColor;font-size:14px;line-height:16px;color:#e0e0e0;transform:translateX(-100%)">:34</div>
<div class="a" style="left:1187px;top:636px;font-family:'Liberation Sans',sans-serif;font-weight:normal;-webkit-text-stroke:0.45px currentColor;font-size:14px;line-height:16px;color:#ff0000">13.26</div>
<div class="a" style="left:1291px;top:636px;font-family:'Liberation Sans',sans-serif;font-weight:normal;-webkit-text-stroke:0.45px currentColor;font-size:14px;line-height:16px;color:#00ff00;transform:translateX(-100%)">20</div>
<div class="a" style="left:1144px;top:655px;font-family:'Liberation Sans',sans-serif;font-weight:normal;-webkit-text-stroke:0.45px currentColor;font-size:14px;line-height:16px;color:#e0e0e0;transform:translateX(-100%)">:37</div>
<div class="a" style="left:1187px;top:655px;font-family:'Liberation Sans',sans-serif;font-weight:normal;-webkit-text-stroke:0.45px currentColor;font-size:14px;line-height:16px;color:#ff0000">13.26</div>
<div class="a" style="left:1291px;top:655px;font-family:'Liberation Sans',sans-serif;font-weight:normal;-webkit-text-stroke:0.45px currentColor;font-size:14px;line-height:16px;color:#00ff00;transform:translateX(-100%)">4</div>
<div class="a" style="left:1144px;top:674px;font-family:'Liberation Sans',sans-serif;font-weight:normal;-webkit-text-stroke:0.45px currentColor;font-size:14px;line-height:16px;color:#e0e0e0;transform:translateX(-100%)">:40</div>
<div class="a" style="left:1187px;top:674px;font-family:'Liberation Sans',sans-serif;font-weight:normal;-webkit-text-stroke:0.45px currentColor;font-size:14px;line-height:16px;color:#ff0000">13.26</div>
<div class="a" style="left:1291px;top:674px;font-family:'Liberation Sans',sans-serif;font-weight:normal;-webkit-text-stroke:0.45px currentColor;font-size:14px;line-height:16px;color:#ff0000;transform:translateX(-100%)">25</div>
<svg class="a" style="left:1227px;top:679px" width="6" height="9"><path d="M3 7.5V1.5M2 2.8l1-1.3L4 2.8" fill="none" stroke="#c00000" stroke-width="1"/></svg>
<div class="a" style="left:1144px;top:693px;font-family:'Liberation Sans',sans-serif;font-weight:normal;-webkit-text-stroke:0.45px currentColor;font-size:14px;line-height:16px;color:#e0e0e0;transform:translateX(-100%)">:43</div>
<div class="a" style="left:1187px;top:693px;font-family:'Liberation Sans',sans-serif;font-weight:normal;-webkit-text-stroke:0.45px currentColor;font-size:14px;line-height:16px;color:#ff0000">13.26</div>
<div class="a" style="left:1291px;top:693px;font-family:'Liberation Sans',sans-serif;font-weight:normal;-webkit-text-stroke:0.45px currentColor;font-size:14px;line-height:16px;color:#00ff00;transform:translateX(-100%)">15</div>
<svg class="a" style="left:1227px;top:698px" width="6" height="9"><path d="M3 1v6M1.5 5.5l1.5 1.8L4.5 5.5" fill="none" stroke="#00a000" stroke-width="1.1"/></svg>
<div class="a" style="left:1144px;top:712px;font-family:'Liberation Sans',sans-serif;font-weight:normal;-webkit-text-stroke:0.45px currentColor;font-size:14px;line-height:16px;color:#e0e0e0;transform:translateX(-100%)">:58</div>
<div class="a" style="left:1187px;top:712px;font-family:'Liberation Sans',sans-serif;font-weight:normal;-webkit-text-stroke:0.45px currentColor;font-size:14px;line-height:16px;color:#ff0000">13.28</div>
<div class="a" style="left:1291px;top:712px;font-family:'Liberation Sans',sans-serif;font-weight:normal;-webkit-text-stroke:0.45px currentColor;font-size:14px;line-height:16px;color:#ff0000;transform:translateX(-100%)">3</div>
<svg class="a" style="left:1227px;top:717px" width="6" height="9"><path d="M3 7.5V1.5M2 2.8l1-1.3L4 2.8" fill="none" stroke="#c00000" stroke-width="1"/></svg>
<div class="a" style="left:1144px;top:731px;font-family:'Liberation Sans',sans-serif;font-weight:normal;-webkit-text-stroke:0.45px currentColor;font-size:14px;line-height:16px;color:#e0e0e0;transform:translateX(-100%)">11:29</div>
<div class="a" style="left:1187px;top:731px;font-family:'Liberation Sans',sans-serif;font-weight:normal;-webkit-text-stroke:0.45px currentColor;font-size:14px;line-height:16px;color:#ff0000">13.27</div>
<div class="a" style="left:1291px;top:731px;font-family:'Liberation Sans',sans-serif;font-weight:normal;-webkit-text-stroke:0.45px currentColor;font-size:14px;line-height:16px;color:#ff0000;transform:translateX(-100%)">7</div>
<div class="a" style="left:1144px;top:750px;font-family:'Liberation Sans',sans-serif;font-weight:normal;-webkit-text-stroke:0.45px currentColor;font-size:14px;line-height:16px;color:#e0e0e0;transform:translateX(-100%)">:25</div>
<div class="a" style="left:1187px;top:750px;font-family:'Liberation Sans',sans-serif;font-weight:normal;-webkit-text-stroke:0.45px currentColor;font-size:14px;line-height:16px;color:#ff0000">13.28</div>
<div class="a" style="left:1291px;top:750px;font-family:'Liberation Sans',sans-serif;font-weight:normal;-webkit-text-stroke:0.45px currentColor;font-size:14px;line-height:16px;color:#ff0000;transform:translateX(-100%)">5</div>
<div class="a" style="left:1360px;top:27px;width:24px;height:773px;background:#f0f0f0"></div>
<div class="a" style="left:1363px;top:49px;width:18px;height:1px;background:#999"></div>
<svg class="a" style="left:1364px;top:57px" width="16" height="14"><path d="M1 10L5 5L9 8L14 3M1 13h14" fill="none" stroke="#000"/></svg>
<div class="a" style="left:1360px;top:82px;font-size:12px;color:#000;line-height:14px;text-align:center;width:24px">8n</div>
<div class="a" style="left:1360px;top:126px;font-size:12px;color:#000;line-height:14px;text-align:center;width:24px">5n</div>
<div class="a" style="left:1360px;top:148px;font-size:12px;color:#000;line-height:14px;text-align:center;width:24px">1</div>
<div class="a" style="left:1360px;top:170px;font-size:12px;color:#000;line-height:14px;text-align:center;width:24px">Mn</div>
<div class="a" style="left:1360px;top:192px;font-size:12px;color:#000;line-height:14px;text-align:center;width:24px">3</div>
<div class="a" style="left:1360px;top:214px;font-size:12px;color:#000;line-height:14px;text-align:center;width:24px">5</div>
<div class="a" style="left:1360px;top:236px;font-size:12px;color:#000;line-height:14px;text-align:center;width:24px">10</div>
<div class="a" style="left:1360px;top:258px;font-size:12px;color:#000;line-height:14px;text-align:center;width:24px">15</div>
<div class="a" style="left:1360px;top:280px;font-size:12px;color:#000;line-height:14px;text-align:center;width:24px">30</div>
<svg class="a" style="left:1365px;top:102px" width="14" height="14"><rect x="0.5" y="0.5" width="13" height="13" fill="none" stroke="#000"/><path d="M2 9L5 5L8 8L12 4" fill="none" stroke="#000"/></svg>
<div class="a" style="left:0;top:801px;width:1384px;height:1px;background:#a0a0a0"></div>
<div class="a" style="left:3px;top:804px;width:74px;height:7px;background:#ff0000;border:1px solid #333;border-bottom:none"></div>
<div class="a" style="left:77px;top:804px;width:74px;height:7px;background:#008000;border:1px solid #333;border-bottom:none"></div>
<div class="a" style="left:431px;top:804px;width:74px;height:7px;background:#ff0000;border:1px solid #333;border-bottom:none"></div>
<div class="a" style="left:505px;top:804px;width:74px;height:7px;background:#008000;border:1px solid #333;border-bottom:none"></div>
<div class="a" style="left:868px;top:804px;width:74px;height:7px;background:#ff0000;border:1px solid #333;border-bottom:none"></div>
<div class="a" style="left:942px;top:804px;width:74px;height:7px;background:#008000;border:1px solid #333;border-bottom:none"></div>
<div class="a" style="left:233px;top:805px;font-size:13px;line-height:14px;color:#008000">11833</div>
<div class="a" style="left:284px;top:805px;font-size:13px;line-height:14px;color:#008000">0.33%</div>
<div class="a" style="left:328px;top:805px;font-size:13px;line-height:14px;color:#008000">(+38.41)</div>
<div class="a" style="left:381px;top:805px;font-size:13px;line-height:14px;color:#000">3681亿</div>
<div class="a" style="left:638px;top:805px;font-size:13px;line-height:14px;color:#000">300</div>
<div class="a" style="left:668px;top:805px;font-size:13px;line-height:14px;color:#008000;letter-spacing:1px">4145.7</div>
<div class="a" style="left:720px;top:805px;font-size:13px;line-height:14px;color:#008000">0.38%</div>
<div class="a" style="left:767px;top:805px;font-size:13px;line-height:14px;color:#008000">(+16.37)</div>
<div class="a" style="left:819px;top:805px;font-size:13px;line-height:14px;color:#000">1780亿</div>
<svg class="a" style="left:214px;top:804px" width="14" height="7"><path d="M1 3h12M3 3v4M11 3v4M5 1h4v6" fill="none" stroke="#333"/></svg>
<div class="a" style="left:1059px;top:802px;width:83px;height:9px;background:#fff;border-top:1px solid #999;border-left:1px solid #999"></div>
<div class="a" style="left:1145px;top:802px;width:30px;height:9px;background:#f0f0f0;border-top:1px solid #fff;border-left:1px solid #fff;box-shadow:inset 0 1px 0 #ccc"></div>
<div class="a" style="left:1176px;top:802px;width:28px;height:9px;background:#f0f0f0;border-top:1px solid #fff;border-left:1px solid #fff;box-shadow:inset 0 1px 0 #ccc"></div>
<div class="a" style="left:1205px;top:802px;width:28px;height:9px;background:#f0f0f0;border-top:1px solid #fff;border-left:1px solid #fff;box-shadow:inset 0 1px 0 #ccc"></div>
<div class="a" style="left:1235px;top:802px;width:28px;height:9px;background:#8fef8f;border-top:1px solid #fff;border-left:1px solid #fff;box-shadow:inset 0 1px 0 #ccc"></div>
<div class="a" style="left:1265px;top:802px;width:28px;height:9px;background:#f0f0f0;border-top:1px solid #fff;border-left:1px solid #fff;box-shadow:inset 0 1px 0 #ccc"></div>
<div class="a" style="left:1295px;top:802px;width:29px;height:9px;background:#f0f0f0;border-top:1px solid #fff;border-left:1px solid #fff;box-shadow:inset 0 1px 0 #ccc"></div>
<div class="a" style="left:1327px;top:802px;width:57px;height:9px;background:#f0f0f0;border-top:1px solid #fff;border-left:1px solid #fff;box-shadow:inset 0 1px 0 #ccc"></div>
<svg class="a" style="left:1140px;top:800px" width="200" height="10"><path d="M14 10 Q20 4 26 10z" fill="#111"/><rect x="46" y="6" width="10" height="4" rx="2" fill="#b01010"/><path d="M73 7l4 3M77 5q4-1 6 5" stroke="#1060a0" fill="none"/><path d="M106 10l2-6l2 6z" fill="#555"/><path d="M134 10l4-4l5 2l1 2z" fill="#c8a000"/><rect x="165" y="6" width="8" height="4" fill="#888"/></svg>
<div class="a" style="left:1330px;top:805px;font-size:13px;line-height:14px">11:32:10</div>
<div class="a" style="left:41px;top:622px;font-family:'Liberation Mono',monospace;font-size:12px;line-height:14px;color:#e0e0e0;letter-spacing:-0.4px">MACDJ XG:1</div>
<div class="a" style="left:42px;top:726px;font-family:'Liberation Mono',monospace;font-size:12px;line-height:14px;color:#e0e0e0">引用测试 JDX:1</div>
<div class="a" style="left:2px;top:26px;width:928px;height:583px;background:#f0f0f0;border:1px solid #aaa;box-shadow:1px 1px 4px rgba(0,0,0,0.35)"></div>
<div class="a" style="left:3px;top:27px;width:926px;height:48px;background:#fff"></div>
<svg class="a" style="left:8px;top:31px" width="24" height="22"><path d="M6.5 17.5V2.5H15L18.5 6V17.5Z" fill="#fff" stroke="#7a7a7a"/><path d="M15 2.5V6H18.5" fill="none" stroke="#999"/><path d="M11 9.5H17M11 10.5L13 12.5L10.5 15.5H17" fill="none" stroke="#333"/><rect x="3.5" y="4.5" width="7" height="7" fill="#fff" stroke="#ff0000"/><path d="M5.5 9.5L8.5 6.5" stroke="#ff0000" stroke-width="1.6"/></svg>
<div class="a" style="left:32px;top:33px;font-size:12px;color:#999;line-height:16px">技术指标编辑 - (所属公式组：特色型)</div>
<div class="a" style="left:811px;top:41px;width:10px;height:1px;background:#888"></div>
<div class="a" style="left:856px;top:36px;width:10px;height:10px;border:1px solid #888"></div>
<svg class="a" style="left:902px;top:36px" width="11" height="11"><path d="M0.5 0.5L10.5 10.5M10.5 0.5L0.5 10.5" stroke="#777" stroke-width="1.1"/></svg>
<div class="a" style="left:10px;top:59px;font-size:12px;color:#777;line-height:15px">文件(F)</div>
<div class="a" style="left:62px;top:59px;font-size:12px;color:#777;line-height:15px">编辑(E)</div>
<div class="a" style="left:115px;top:59px;font-size:12px;color:#777;line-height:15px">查看(V)</div>
<div class="a" style="left:169px;top:59px;font-size:12px;color:#777;line-height:15px">插入(I)</div>
<div class="a" style="left:219px;top:59px;font-size:12px;color:#777;line-height:15px">调试(D)</div>
<div class="a" style="left:273px;top:59px;font-size:12px;color:#777;line-height:15px">属性(P)</div>
<div class="a" style="left:327px;top:59px;font-size:12px;color:#777;line-height:15px">帮助(H)</div>
<div class="a" style="left:11px;top:77px;width:646px;height:1px;background:#a0a0a0"></div>
<div class="a" style="left:11px;top:78px;width:646px;height:1px;background:#fff"></div>
<div class="a" style="left:20px;top:87px;font-size:12px;line-height:15px">名称:</div>
<div class="a" style="left:20px;top:114px;font-size:12px;line-height:15px">说明:</div>
<div class="a" style="left:54px;top:83px;width:459px;height:21px;background:#fff;border:1px solid #7a7a7a"></div>
<div class="a" style="left:56px;top:85px;font-size:12px;line-height:15px">引用测试</div>
<div class="a" style="left:54px;top:110px;width:459px;height:21px;background:#fff;border:1px solid #7a7a7a"></div>
<div class="a" style="left:56px;top:112px;font-size:12px;line-height:15px">手滑燃气</div>
<div class="a" style="left:527px;top:84px;width:60px;height:19px;background:#e1e1e1;border:1px solid #adadad;text-align:center;font-size:12px;line-height:17px">保存</div>
<div class="a" style="left:608px;top:84px;width:60px;height:19px;background:#e1e1e1;border:1px solid #adadad;text-align:center;font-size:12px;line-height:17px">回测</div>
<div class="a" style="left:689px;top:84px;width:60px;height:19px;background:#e1e1e1;border:1px solid #adadad;text-align:center;font-size:12px;line-height:17px">运行</div>
<div class="a" style="left:770px;top:84px;width:60px;height:19px;background:#e1e1e1;border:1px solid #adadad;text-align:center;font-size:12px;line-height:17px">编译</div>
<div class="a" style="left:851px;top:84px;width:60px;height:19px;background:#e1e1e1;border:1px solid #adadad;text-align:center;font-size:12px;line-height:17px">确定</div>
<div class="a" style="left:519px;top:110px;font-size:12px;color:#ff0000;line-height:15px">调试信息:</div>
<div class="a" style="left:20px;top:137px;width:13px;height:13px;border:1px solid #333;border-radius:50%;background:#fff"></div>
<div class="a" style="left:23px;top:140px;width:7px;height:7px;border-radius:50%;background:#222"></div>
<div class="a" style="left:35px;top:137px;font-size:12px;line-height:15px">副图</div>
<div class="a" style="left:71px;top:137px;width:13px;height:13px;border:1px solid #333;border-radius:50%;background:#fff"></div>
<div class="a" style="left:87px;top:137px;font-size:12px;line-height:15px">主图叠加</div>
<div class="a" style="left:146px;top:137px;width:13px;height:13px;border:1px solid #333;background:#fff"></div>
<div class="a" style="left:162px;top:137px;font-size:12px;line-height:15px">加密</div>
<div class="a" style="left:20px;top:157px;width:891px;height:429px;background:#fff;border-top:1px solid #a0a0a0;border-left:1px solid #a0a0a0"></div>
<div class="a" style="left:21px;top:158px;width:21px;height:412px;background:#e4e4e4"></div>
<div class="a" style="left:42px;top:158px;font-family:'Liberation Mono',monospace;font-size:11.7px;line-height:15px;transform:scaleY(1.22);transform-origin:0 3px">dc:=<span style="color:#0000ff">DATACOUNT</span>;</div>
<div class="a" style="left:42px;top:188px;font-family:'Liberation Mono',monospace;font-size:11.7px;line-height:15px;transform:scaleY(1.22);transform-origin:0 3px">JDX:<span style="color:#0000ff">STKINDIex</span>(<span style="color:#ff00ff">''</span>,<span style="color:#ff00ff">'MACDJ.XG'</span>,0,14,0,30) <span style="color:#0000ff">AND</span> DC;<span style="color:#008000">//100 FAIL</span></div>
<div class="a" style="left:23px;top:218px;font-family:'Liberation Mono',monospace;font-size:11.7px;line-height:15px;transform:scaleY(1.22);transform-origin:0 3px;color:#008080">5</div>
<div class="a" style="left:21px;top:570px;width:889px;height:16px;background:#f0f0f0"></div>
<div class="a" style="left:20px;top:586px;width:891px;height:1px;background:#fff"></div>
<div class="a" style="left:910px;top:157px;width:1px;height:430px;background:#fff"></div>
<div class="a" style="left:38px;top:571px;width:25px;height:14px;background:#cdcdcd"></div>
<svg class="a" style="left:24px;top:573px" width="10" height="10"><path d="M6.5 1.5L3 5L6.5 8.5" fill="none" stroke="#404040" stroke-width="2"/></svg>
<svg class="a" style="left:897px;top:573px" width="10" height="10"><path d="M3.5 1.5L7 5L3.5 8.5" fill="none" stroke="#404040" stroke-width="2"/></svg>
<div class="a" style="left:4px;top:273px;width:12px;height:72px;background:#e1e1e1;border:1px solid #adadad"></div>
<svg class="a" style="left:6px;top:303px" width="8" height="10"><path d="M6 1L2 5L6 9" fill="none" stroke="#444"/></svg>
<div class="a" style="left:914px;top:273px;width:13px;height:70px;background:#e1e1e1;border:1px solid #adadad"></div>
<svg class="a" style="left:916px;top:303px" width="8" height="10"><path d="M2 1L6 5L2 9" fill="none" stroke="#444"/></svg>
<div class="a" style="left:23px;top:591px;font-size:12px;color:#0066cc;line-height:15px;text-decoration:underline">常见问题汇总</div>
<div class="a" style="left:170px;top:591px;font-size:12px;color:#0066cc;line-height:15px;text-decoration:underline">公式编写客服中心</div>
<div class="a" style="left:315px;top:591px;font-size:12px;color:#0066cc;line-height:15px;text-decoration:underline">公式模型编写调试教程</div>
<div class="a" style="left:482px;top:591px;font-size:12px;color:#0066cc;line-height:15px;text-decoration:underline">提高编写效率的注意事项</div>
<svg class="a" style="left:420px;top:340px" width="240" height="150"><path d="M30.3 50.9 C30.4 54.0 30.1 64.1 30.8 69.4 C31.4 74.6 33.6 78.8 34.3 82.4 C34.9 86.0 34.6 89.6 34.7 91.0" fill="none" stroke="#000" stroke-width="2.6" stroke-linecap="round" stroke-linejoin="round"/><path d="M28.2 94.3 C29.3 95.2 32.3 98.1 34.7 99.7 C37.0 101.3 39.6 103.4 42.3 104.1 C45.0 104.7 49.1 104.3 50.9 103.6 C52.7 102.9 52.7 100.4 53.1 99.7" fill="none" stroke="#000" stroke-width="2.6" stroke-linecap="round" stroke-linejoin="round"/><path d="M52.0 55.3 C52.8 54.8 52.8 53.1 56.8 52.7 C60.8 52.2 72.7 52.7 75.9 52.7 C79.1 52.7 75.9 51.5 75.9 52.7 C75.9 53.8 76.6 57.2 75.9 59.6 C75.1 62.0 73.3 64.5 71.5 67.2 C69.7 69.9 67.2 72.6 65.0 75.9 C62.9 79.1 60.3 83.5 58.5 86.7 C56.7 90.0 55.3 92.9 54.2 95.4 C53.1 97.9 52.4 100.8 52.0 101.9" fill="none" stroke="#000" stroke-width="2.6" stroke-linecap="round" stroke-linejoin="round"/><path d="M40.1 81.9 C41.5 81.7 45.8 81.0 48.8 80.6 C51.8 80.3 56.5 79.9 58.1 79.8" fill="none" stroke="#000" stroke-width="2.6" stroke-linecap="round" stroke-linejoin="round"/><path d="M151.7 42.3 C151.0 42.6 150.3 42.5 147.4 44.4 C144.5 46.4 138.7 50.6 134.4 54.2 C130.1 57.8 125.2 62.7 121.4 66.1 C117.6 69.5 113.3 73.3 111.6 74.8 C110.0 76.2 110.0 75.3 111.6 74.8 C113.3 74.2 117.2 73.0 121.4 71.5 C125.6 70.1 131.5 67.7 136.6 66.1 C141.6 64.5 148.2 62.8 151.7 61.8 C155.3 60.8 156.8 60.5 157.8 60.3 C158.8 60.0 158.8 59.1 157.8 60.3 C156.8 61.4 154.2 64.2 151.7 67.2 C149.3 70.2 145.8 74.4 143.1 78.0 C140.4 81.7 136.8 87.1 135.5 88.9" fill="none" stroke="#000" stroke-width="2.6" stroke-linecap="round" stroke-linejoin="round"/><path d="M159.3 72.6 C158.1 74.2 153.7 79.7 151.7 82.4 C149.8 85.1 149.2 86.4 147.4 88.9 C145.6 91.4 142.0 96.1 140.9 97.6" fill="none" stroke="#000" stroke-width="2.6" stroke-linecap="round" stroke-linejoin="round"/><path d="M110.6 118.1 C112.4 117.4 117.4 115.1 121.4 113.8 C125.4 112.5 129.3 111.7 134.4 110.1 C139.5 108.5 147.4 105.4 151.7 104.1 C156.1 102.7 157.5 102.8 160.4 101.9 C163.3 101.0 167.6 99.2 169.1 98.6" fill="none" stroke="#000" stroke-width="2.6" stroke-linecap="round" stroke-linejoin="round"/><path d="M190.8 25.6 C190.7 31.4 190.3 52.5 190.3 60.7 C190.3 68.9 190.0 69.7 190.8 74.8 C191.6 79.8 193.5 85.8 195.1 91.0 C196.7 96.3 198.7 101.5 200.5 106.2 C202.3 110.9 204.3 115.4 205.9 119.2 C207.6 123.0 208.8 126.7 210.3 129.0 C211.7 131.2 212.6 132.5 214.6 132.7 C216.6 132.8 220.2 132.7 222.2 130.1 C224.2 127.5 225.8 119.2 226.5 117.1" fill="none" stroke="#000" stroke-width="2.6" stroke-linecap="round" stroke-linejoin="round"/><path d="M201.6 53.1 L215.7 53.1" fill="none" stroke="#000" stroke-width="2.6" stroke-linecap="round" stroke-linejoin="round"/><path d="M162.6 81.3 C164.4 81.1 169.1 81.1 173.4 80.2 C177.8 79.3 183.5 77.1 188.6 75.9 C193.7 74.6 199.3 73.4 203.8 72.6 C208.3 71.8 213.7 71.4 215.7 71.1" fill="none" stroke="#000" stroke-width="2.6" stroke-linecap="round" stroke-linejoin="round"/><path d="M183.2 124.6 C184.4 123.6 187.7 120.7 190.8 118.1 C193.8 115.6 198.0 112.5 201.6 109.5 C205.2 106.4 209.9 102.1 212.4 99.7 C215.0 97.4 214.8 96.3 216.8 95.4 C218.8 94.5 223.1 94.5 224.4 94.3" fill="none" stroke="#000" stroke-width="2.6" stroke-linecap="round" stroke-linejoin="round"/><rect x="208.5" y="32.5" width="0.8" height="0.8" fill="#000"/></svg>
<div class="a" style="left:1011px;top:301px;width:380px;height:194px;background:#f0f0f0;border:1px solid #888;box-shadow:0 2px 6px rgba(0,0,0,0.35)"></div>
<div class="a" style="left:1012px;top:302px;width:372px;height:25px;background:#fff"></div>
<div class="a" style="left:1015px;top:305px;font-size:12px;line-height:16px">图标数据使用设置</div>
<svg class="a" style="left:1367px;top:307px" width="12" height="12"><path d="M0.5 0.5L11.5 11.5M11.5 0.5L0.5 11.5" stroke="#000" stroke-width="1.1"/></svg>
<div class="a" style="left:1022px;top:339px;width:13px;height:13px;border:1px solid #333;background:#fff"></div>
<svg class="a" style="left:1022px;top:339px" width="13" height="13"><path d="M2.5 6.5L5 9.5L10.5 3" fill="none" stroke="#222" stroke-width="1.3"/></svg>
<div class="a" style="left:1037px;top:338px;font-size:12px;line-height:16px">限制该窗格中使用的数据数量</div>
<div class="a" style="left:1037px;top:363px;font-size:12px;line-height:16px">限制图表数据使用数量</div>
<div class="a" style="left:1163px;top:360px;width:60px;height:21px;background:#fff;border:1px solid #7a7a7a"></div>
<div class="a" style="left:1165px;top:364px;font-size:11px;line-height:12px">360</div>
<div class="a" style="left:1227px;top:363px;font-size:12px;line-height:16px">根K线</div>
<div class="a" style="left:1040px;top:389px;font-size:12px;line-height:16px">说明：降低图表数据使用数量可以有效的提高公式的计算速度。</div>
<div class="a" style="left:1076px;top:407px;font-size:12px;line-height:16px">推荐设置数值在500根K线以下。</div>
<div class="a" style="left:1022px;top:433px;width:13px;height:13px;border:1px solid #333;background:#fff"></div>
<svg class="a" style="left:1022px;top:433px" width="13" height="13"><path d="M2.5 6.5L5 9.5L10.5 3" fill="none" stroke="#222" stroke-width="1.3"/></svg>
<div class="a" style="left:1037px;top:432px;font-size:12px;line-height:16px">当窗格加载数据过多可能影响速度时提醒我</div>
<div class="a" style="left:1203px;top:463px;width:73px;height:19px;background:#e1e1e1;border:2px solid #0078d7;text-align:center;font-size:12px;line-height:15px">确定</div>
<div class="a" style="left:1206px;top:466px;width:67px;height:13px;border:1px dotted #000"></div>
<div class="a" style="left:1303px;top:463px;width:73px;height:19px;background:#e1e1e1;border:1px solid #adadad;text-align:center;font-size:12px;line-height:17px">取消</div>
</body></html>
